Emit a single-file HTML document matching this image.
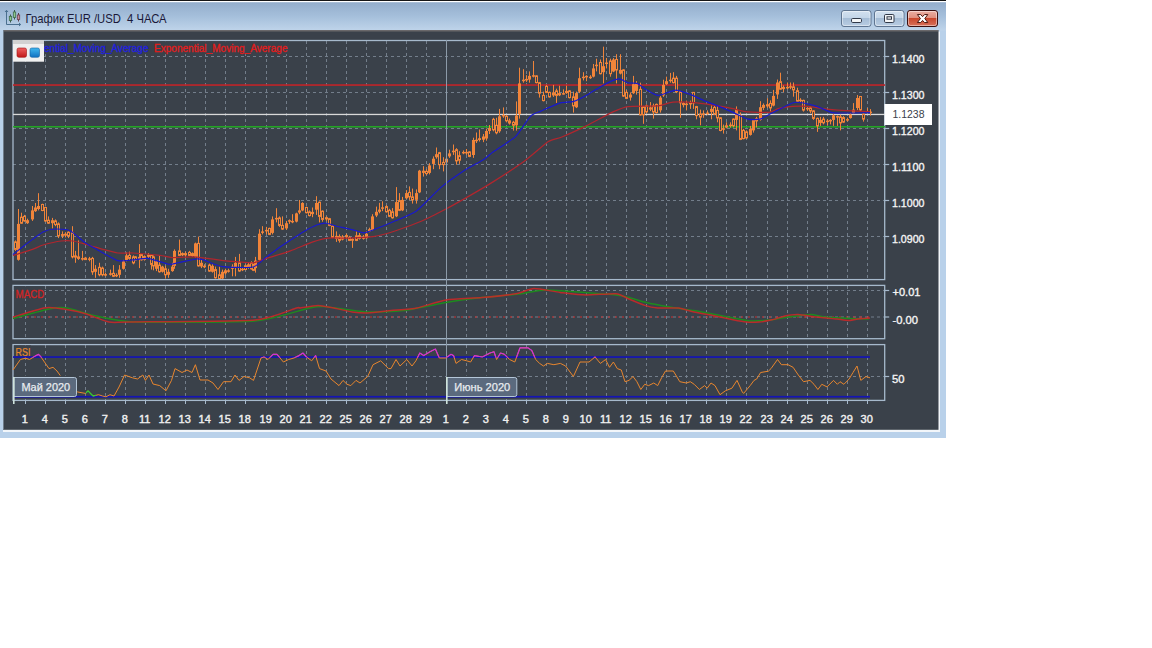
<!DOCTYPE html><html><head><meta charset="utf-8"><style>html,body{margin:0;padding:0;background:#fff;width:1152px;height:648px;overflow:hidden}svg{display:block}</style></head><body><svg width="1152" height="648" viewBox="0 0 1152 648"><rect x="0" y="0" width="1152" height="648" fill="#ffffff"/><defs><linearGradient id="tb" x1="0" y1="0" x2="0" y2="1"><stop offset="0" stop-color="#93adcb"/><stop offset="0.5" stop-color="#a5bfdb"/><stop offset="1" stop-color="#bfd4ea"/></linearGradient><linearGradient id="bmin" x1="0" y1="0" x2="0" y2="1"><stop offset="0" stop-color="#d3e1ef"/><stop offset="0.45" stop-color="#c4d6e9"/><stop offset="0.5" stop-color="#a6bdd6"/><stop offset="1" stop-color="#b9cde3"/></linearGradient><linearGradient id="bcls" x1="0" y1="0" x2="0" y2="1"><stop offset="0" stop-color="#eab1a5"/><stop offset="0.45" stop-color="#e0907f"/><stop offset="0.5" stop-color="#c9482d"/><stop offset="1" stop-color="#d9735c"/></linearGradient><linearGradient id="lr" x1="0" y1="0" x2="0" y2="1"><stop offset="0" stop-color="#f06060"/><stop offset="1" stop-color="#c01818"/></linearGradient><linearGradient id="lb" x1="0" y1="0" x2="0" y2="1"><stop offset="0" stop-color="#40b8f0"/><stop offset="1" stop-color="#1070c0"/></linearGradient><clipPath id="cpMain"><rect x="13" y="40" width="872" height="239"/></clipPath><clipPath id="cpMag"><rect x="13" y="340" width="860" height="17.6"/></clipPath><clipPath id="cpGrn"><rect x="86" y="389" width="10" height="12"/></clipPath></defs><rect x="0" y="0" width="946" height="438" fill="#b9d1ea"/><rect x="0" y="2" width="946" height="28.5" fill="url(#tb)"/><rect x="0" y="0" width="946" height="1" fill="#151515"/><rect x="0" y="1" width="946" height="1.2" fill="#ffffff"/><rect x="3" y="31.5" width="937" height="400.5" fill="#f2f6fa"/><rect x="3" y="30" width="935.5" height="399.8" fill="#3a414a"/><rect x="3" y="30.4" width="935.5" height="0.9" fill="#8a8480"/><rect x="3" y="30" width="1" height="399.8" fill="#6f7c8a"/><g fill="none" stroke="#4a6f8f" stroke-width="1"><path d="M6.5,10.5 V24.5 H20.5"/><path d="M5,12 L6.5,10.3 L8,12"/><path d="M19,23 L20.7,24.5 L19,26"/></g><g stroke-width="1"><path d="M10.5,14.5 V22.5" stroke="#3d5a4a"/><rect x="9.3" y="16.3" width="2.4" height="4.2" fill="#8fc78f" stroke="#3d6a4a" stroke-width="0.8"/><path d="M14.5,10 V19.5" stroke="#3d5a4a"/><rect x="13.3" y="12" width="2.4" height="5.5" fill="#8fc78f" stroke="#3d6a4a" stroke-width="0.8"/><path d="M18.5,13 V21.5" stroke="#5a3d4a"/><rect x="17.3" y="15" width="2.4" height="4.5" fill="#c78f9f" stroke="#6a3d4a" stroke-width="0.8"/></g><text x="25.5" y="22.8" font-family="Liberation Sans, sans-serif" font-size="12.2" fill="#1a1838" textLength="141" lengthAdjust="spacingAndGlyphs">График EUR /USD&#160; 4 ЧАСА</text><rect x="841.5" y="10.5" width="29.5" height="16" rx="2.5" fill="url(#bmin)" stroke="#5f7591" stroke-width="1"/><rect x="842.5" y="11.5" width="27.5" height="14" rx="2" fill="none" stroke="#ffffff" stroke-opacity="0.45" stroke-width="1"/><rect x="874.5" y="10.5" width="29.5" height="16" rx="2.5" fill="url(#bmin)" stroke="#5f7591" stroke-width="1"/><rect x="875.5" y="11.5" width="27.5" height="14" rx="2" fill="none" stroke="#ffffff" stroke-opacity="0.45" stroke-width="1"/><rect x="907.5" y="10.5" width="30.0" height="16" rx="2.5" fill="url(#bcls)" stroke="#3a1010" stroke-width="1"/><rect x="908.5" y="11.5" width="28.0" height="14" rx="2" fill="none" stroke="#ffffff" stroke-opacity="0.45" stroke-width="1"/><rect x="851.5" y="18.5" width="10" height="4" rx="1.2" fill="#f4f6f8" stroke="#303848" stroke-width="1"/><rect x="884.5" y="14.5" width="9.5" height="8" rx="1.2" fill="#f4f6f8" stroke="#303848" stroke-width="1"/><rect x="887" y="16.8" width="4.5" height="2.4" fill="none" stroke="#303848" stroke-width="1"/><polygon points="917.40,14.55 920.70,14.55 922.60,16.65 924.50,14.55 927.80,14.55 924.80,18.55 927.80,22.55 924.50,22.55 922.60,20.45 920.70,22.55 917.40,22.55 920.40,18.55" fill="#ffffff" stroke="#4a1810" stroke-width="1" stroke-linejoin="round"/><line x1="25.5" y1="41" x2="25.5" y2="279" stroke="#737e8b" stroke-width="1" stroke-dasharray="3,3"/><line x1="45.5" y1="41" x2="45.5" y2="279" stroke="#737e8b" stroke-width="1" stroke-dasharray="3,3"/><line x1="65.5" y1="41" x2="65.5" y2="279" stroke="#737e8b" stroke-width="1" stroke-dasharray="3,3"/><line x1="85.5" y1="41" x2="85.5" y2="279" stroke="#737e8b" stroke-width="1" stroke-dasharray="3,3"/><line x1="105.5" y1="41" x2="105.5" y2="279" stroke="#737e8b" stroke-width="1" stroke-dasharray="3,3"/><line x1="125.5" y1="41" x2="125.5" y2="279" stroke="#737e8b" stroke-width="1" stroke-dasharray="3,3"/><line x1="145.5" y1="41" x2="145.5" y2="279" stroke="#737e8b" stroke-width="1" stroke-dasharray="3,3"/><line x1="165.5" y1="41" x2="165.5" y2="279" stroke="#737e8b" stroke-width="1" stroke-dasharray="3,3"/><line x1="185.5" y1="41" x2="185.5" y2="279" stroke="#737e8b" stroke-width="1" stroke-dasharray="3,3"/><line x1="205.5" y1="41" x2="205.5" y2="279" stroke="#737e8b" stroke-width="1" stroke-dasharray="3,3"/><line x1="225.5" y1="41" x2="225.5" y2="279" stroke="#737e8b" stroke-width="1" stroke-dasharray="3,3"/><line x1="245.5" y1="41" x2="245.5" y2="279" stroke="#737e8b" stroke-width="1" stroke-dasharray="3,3"/><line x1="266.5" y1="41" x2="266.5" y2="279" stroke="#737e8b" stroke-width="1" stroke-dasharray="3,3"/><line x1="286.5" y1="41" x2="286.5" y2="279" stroke="#737e8b" stroke-width="1" stroke-dasharray="3,3"/><line x1="306.5" y1="41" x2="306.5" y2="279" stroke="#737e8b" stroke-width="1" stroke-dasharray="3,3"/><line x1="326.5" y1="41" x2="326.5" y2="279" stroke="#737e8b" stroke-width="1" stroke-dasharray="3,3"/><line x1="346.5" y1="41" x2="346.5" y2="279" stroke="#737e8b" stroke-width="1" stroke-dasharray="3,3"/><line x1="366.5" y1="41" x2="366.5" y2="279" stroke="#737e8b" stroke-width="1" stroke-dasharray="3,3"/><line x1="386.5" y1="41" x2="386.5" y2="279" stroke="#737e8b" stroke-width="1" stroke-dasharray="3,3"/><line x1="406.5" y1="41" x2="406.5" y2="279" stroke="#737e8b" stroke-width="1" stroke-dasharray="3,3"/><line x1="426.5" y1="41" x2="426.5" y2="279" stroke="#737e8b" stroke-width="1" stroke-dasharray="3,3"/><line x1="446.5" y1="41" x2="446.5" y2="279" stroke="#737e8b" stroke-width="1" stroke-dasharray="3,3"/><line x1="466.5" y1="41" x2="466.5" y2="279" stroke="#737e8b" stroke-width="1" stroke-dasharray="3,3"/><line x1="486.5" y1="41" x2="486.5" y2="279" stroke="#737e8b" stroke-width="1" stroke-dasharray="3,3"/><line x1="506.5" y1="41" x2="506.5" y2="279" stroke="#737e8b" stroke-width="1" stroke-dasharray="3,3"/><line x1="526.5" y1="41" x2="526.5" y2="279" stroke="#737e8b" stroke-width="1" stroke-dasharray="3,3"/><line x1="546.5" y1="41" x2="546.5" y2="279" stroke="#737e8b" stroke-width="1" stroke-dasharray="3,3"/><line x1="566.5" y1="41" x2="566.5" y2="279" stroke="#737e8b" stroke-width="1" stroke-dasharray="3,3"/><line x1="586.5" y1="41" x2="586.5" y2="279" stroke="#737e8b" stroke-width="1" stroke-dasharray="3,3"/><line x1="606.5" y1="41" x2="606.5" y2="279" stroke="#737e8b" stroke-width="1" stroke-dasharray="3,3"/><line x1="626.5" y1="41" x2="626.5" y2="279" stroke="#737e8b" stroke-width="1" stroke-dasharray="3,3"/><line x1="646.5" y1="41" x2="646.5" y2="279" stroke="#737e8b" stroke-width="1" stroke-dasharray="3,3"/><line x1="666.5" y1="41" x2="666.5" y2="279" stroke="#737e8b" stroke-width="1" stroke-dasharray="3,3"/><line x1="686.5" y1="41" x2="686.5" y2="279" stroke="#737e8b" stroke-width="1" stroke-dasharray="3,3"/><line x1="706.5" y1="41" x2="706.5" y2="279" stroke="#737e8b" stroke-width="1" stroke-dasharray="3,3"/><line x1="726.5" y1="41" x2="726.5" y2="279" stroke="#737e8b" stroke-width="1" stroke-dasharray="3,3"/><line x1="746.5" y1="41" x2="746.5" y2="279" stroke="#737e8b" stroke-width="1" stroke-dasharray="3,3"/><line x1="767.5" y1="41" x2="767.5" y2="279" stroke="#737e8b" stroke-width="1" stroke-dasharray="3,3"/><line x1="787.5" y1="41" x2="787.5" y2="279" stroke="#737e8b" stroke-width="1" stroke-dasharray="3,3"/><line x1="807.5" y1="41" x2="807.5" y2="279" stroke="#737e8b" stroke-width="1" stroke-dasharray="3,3"/><line x1="827.5" y1="41" x2="827.5" y2="279" stroke="#737e8b" stroke-width="1" stroke-dasharray="3,3"/><line x1="847.5" y1="41" x2="847.5" y2="279" stroke="#737e8b" stroke-width="1" stroke-dasharray="3,3"/><line x1="867.5" y1="41" x2="867.5" y2="279" stroke="#737e8b" stroke-width="1" stroke-dasharray="3,3"/><line x1="25.5" y1="286" x2="25.5" y2="338" stroke="#737e8b" stroke-width="1" stroke-dasharray="3,3"/><line x1="45.5" y1="286" x2="45.5" y2="338" stroke="#737e8b" stroke-width="1" stroke-dasharray="3,3"/><line x1="65.5" y1="286" x2="65.5" y2="338" stroke="#737e8b" stroke-width="1" stroke-dasharray="3,3"/><line x1="85.5" y1="286" x2="85.5" y2="338" stroke="#737e8b" stroke-width="1" stroke-dasharray="3,3"/><line x1="105.5" y1="286" x2="105.5" y2="338" stroke="#737e8b" stroke-width="1" stroke-dasharray="3,3"/><line x1="125.5" y1="286" x2="125.5" y2="338" stroke="#737e8b" stroke-width="1" stroke-dasharray="3,3"/><line x1="145.5" y1="286" x2="145.5" y2="338" stroke="#737e8b" stroke-width="1" stroke-dasharray="3,3"/><line x1="165.5" y1="286" x2="165.5" y2="338" stroke="#737e8b" stroke-width="1" stroke-dasharray="3,3"/><line x1="185.5" y1="286" x2="185.5" y2="338" stroke="#737e8b" stroke-width="1" stroke-dasharray="3,3"/><line x1="205.5" y1="286" x2="205.5" y2="338" stroke="#737e8b" stroke-width="1" stroke-dasharray="3,3"/><line x1="225.5" y1="286" x2="225.5" y2="338" stroke="#737e8b" stroke-width="1" stroke-dasharray="3,3"/><line x1="245.5" y1="286" x2="245.5" y2="338" stroke="#737e8b" stroke-width="1" stroke-dasharray="3,3"/><line x1="266.5" y1="286" x2="266.5" y2="338" stroke="#737e8b" stroke-width="1" stroke-dasharray="3,3"/><line x1="286.5" y1="286" x2="286.5" y2="338" stroke="#737e8b" stroke-width="1" stroke-dasharray="3,3"/><line x1="306.5" y1="286" x2="306.5" y2="338" stroke="#737e8b" stroke-width="1" stroke-dasharray="3,3"/><line x1="326.5" y1="286" x2="326.5" y2="338" stroke="#737e8b" stroke-width="1" stroke-dasharray="3,3"/><line x1="346.5" y1="286" x2="346.5" y2="338" stroke="#737e8b" stroke-width="1" stroke-dasharray="3,3"/><line x1="366.5" y1="286" x2="366.5" y2="338" stroke="#737e8b" stroke-width="1" stroke-dasharray="3,3"/><line x1="386.5" y1="286" x2="386.5" y2="338" stroke="#737e8b" stroke-width="1" stroke-dasharray="3,3"/><line x1="406.5" y1="286" x2="406.5" y2="338" stroke="#737e8b" stroke-width="1" stroke-dasharray="3,3"/><line x1="426.5" y1="286" x2="426.5" y2="338" stroke="#737e8b" stroke-width="1" stroke-dasharray="3,3"/><line x1="446.5" y1="286" x2="446.5" y2="338" stroke="#737e8b" stroke-width="1" stroke-dasharray="3,3"/><line x1="466.5" y1="286" x2="466.5" y2="338" stroke="#737e8b" stroke-width="1" stroke-dasharray="3,3"/><line x1="486.5" y1="286" x2="486.5" y2="338" stroke="#737e8b" stroke-width="1" stroke-dasharray="3,3"/><line x1="506.5" y1="286" x2="506.5" y2="338" stroke="#737e8b" stroke-width="1" stroke-dasharray="3,3"/><line x1="526.5" y1="286" x2="526.5" y2="338" stroke="#737e8b" stroke-width="1" stroke-dasharray="3,3"/><line x1="546.5" y1="286" x2="546.5" y2="338" stroke="#737e8b" stroke-width="1" stroke-dasharray="3,3"/><line x1="566.5" y1="286" x2="566.5" y2="338" stroke="#737e8b" stroke-width="1" stroke-dasharray="3,3"/><line x1="586.5" y1="286" x2="586.5" y2="338" stroke="#737e8b" stroke-width="1" stroke-dasharray="3,3"/><line x1="606.5" y1="286" x2="606.5" y2="338" stroke="#737e8b" stroke-width="1" stroke-dasharray="3,3"/><line x1="626.5" y1="286" x2="626.5" y2="338" stroke="#737e8b" stroke-width="1" stroke-dasharray="3,3"/><line x1="646.5" y1="286" x2="646.5" y2="338" stroke="#737e8b" stroke-width="1" stroke-dasharray="3,3"/><line x1="666.5" y1="286" x2="666.5" y2="338" stroke="#737e8b" stroke-width="1" stroke-dasharray="3,3"/><line x1="686.5" y1="286" x2="686.5" y2="338" stroke="#737e8b" stroke-width="1" stroke-dasharray="3,3"/><line x1="706.5" y1="286" x2="706.5" y2="338" stroke="#737e8b" stroke-width="1" stroke-dasharray="3,3"/><line x1="726.5" y1="286" x2="726.5" y2="338" stroke="#737e8b" stroke-width="1" stroke-dasharray="3,3"/><line x1="746.5" y1="286" x2="746.5" y2="338" stroke="#737e8b" stroke-width="1" stroke-dasharray="3,3"/><line x1="767.5" y1="286" x2="767.5" y2="338" stroke="#737e8b" stroke-width="1" stroke-dasharray="3,3"/><line x1="787.5" y1="286" x2="787.5" y2="338" stroke="#737e8b" stroke-width="1" stroke-dasharray="3,3"/><line x1="807.5" y1="286" x2="807.5" y2="338" stroke="#737e8b" stroke-width="1" stroke-dasharray="3,3"/><line x1="827.5" y1="286" x2="827.5" y2="338" stroke="#737e8b" stroke-width="1" stroke-dasharray="3,3"/><line x1="847.5" y1="286" x2="847.5" y2="338" stroke="#737e8b" stroke-width="1" stroke-dasharray="3,3"/><line x1="867.5" y1="286" x2="867.5" y2="338" stroke="#737e8b" stroke-width="1" stroke-dasharray="3,3"/><line x1="25.5" y1="345" x2="25.5" y2="400" stroke="#737e8b" stroke-width="1" stroke-dasharray="3,3"/><line x1="45.5" y1="345" x2="45.5" y2="400" stroke="#737e8b" stroke-width="1" stroke-dasharray="3,3"/><line x1="65.5" y1="345" x2="65.5" y2="400" stroke="#737e8b" stroke-width="1" stroke-dasharray="3,3"/><line x1="85.5" y1="345" x2="85.5" y2="400" stroke="#737e8b" stroke-width="1" stroke-dasharray="3,3"/><line x1="105.5" y1="345" x2="105.5" y2="400" stroke="#737e8b" stroke-width="1" stroke-dasharray="3,3"/><line x1="125.5" y1="345" x2="125.5" y2="400" stroke="#737e8b" stroke-width="1" stroke-dasharray="3,3"/><line x1="145.5" y1="345" x2="145.5" y2="400" stroke="#737e8b" stroke-width="1" stroke-dasharray="3,3"/><line x1="165.5" y1="345" x2="165.5" y2="400" stroke="#737e8b" stroke-width="1" stroke-dasharray="3,3"/><line x1="185.5" y1="345" x2="185.5" y2="400" stroke="#737e8b" stroke-width="1" stroke-dasharray="3,3"/><line x1="205.5" y1="345" x2="205.5" y2="400" stroke="#737e8b" stroke-width="1" stroke-dasharray="3,3"/><line x1="225.5" y1="345" x2="225.5" y2="400" stroke="#737e8b" stroke-width="1" stroke-dasharray="3,3"/><line x1="245.5" y1="345" x2="245.5" y2="400" stroke="#737e8b" stroke-width="1" stroke-dasharray="3,3"/><line x1="266.5" y1="345" x2="266.5" y2="400" stroke="#737e8b" stroke-width="1" stroke-dasharray="3,3"/><line x1="286.5" y1="345" x2="286.5" y2="400" stroke="#737e8b" stroke-width="1" stroke-dasharray="3,3"/><line x1="306.5" y1="345" x2="306.5" y2="400" stroke="#737e8b" stroke-width="1" stroke-dasharray="3,3"/><line x1="326.5" y1="345" x2="326.5" y2="400" stroke="#737e8b" stroke-width="1" stroke-dasharray="3,3"/><line x1="346.5" y1="345" x2="346.5" y2="400" stroke="#737e8b" stroke-width="1" stroke-dasharray="3,3"/><line x1="366.5" y1="345" x2="366.5" y2="400" stroke="#737e8b" stroke-width="1" stroke-dasharray="3,3"/><line x1="386.5" y1="345" x2="386.5" y2="400" stroke="#737e8b" stroke-width="1" stroke-dasharray="3,3"/><line x1="406.5" y1="345" x2="406.5" y2="400" stroke="#737e8b" stroke-width="1" stroke-dasharray="3,3"/><line x1="426.5" y1="345" x2="426.5" y2="400" stroke="#737e8b" stroke-width="1" stroke-dasharray="3,3"/><line x1="446.5" y1="345" x2="446.5" y2="400" stroke="#737e8b" stroke-width="1" stroke-dasharray="3,3"/><line x1="466.5" y1="345" x2="466.5" y2="400" stroke="#737e8b" stroke-width="1" stroke-dasharray="3,3"/><line x1="486.5" y1="345" x2="486.5" y2="400" stroke="#737e8b" stroke-width="1" stroke-dasharray="3,3"/><line x1="506.5" y1="345" x2="506.5" y2="400" stroke="#737e8b" stroke-width="1" stroke-dasharray="3,3"/><line x1="526.5" y1="345" x2="526.5" y2="400" stroke="#737e8b" stroke-width="1" stroke-dasharray="3,3"/><line x1="546.5" y1="345" x2="546.5" y2="400" stroke="#737e8b" stroke-width="1" stroke-dasharray="3,3"/><line x1="566.5" y1="345" x2="566.5" y2="400" stroke="#737e8b" stroke-width="1" stroke-dasharray="3,3"/><line x1="586.5" y1="345" x2="586.5" y2="400" stroke="#737e8b" stroke-width="1" stroke-dasharray="3,3"/><line x1="606.5" y1="345" x2="606.5" y2="400" stroke="#737e8b" stroke-width="1" stroke-dasharray="3,3"/><line x1="626.5" y1="345" x2="626.5" y2="400" stroke="#737e8b" stroke-width="1" stroke-dasharray="3,3"/><line x1="646.5" y1="345" x2="646.5" y2="400" stroke="#737e8b" stroke-width="1" stroke-dasharray="3,3"/><line x1="666.5" y1="345" x2="666.5" y2="400" stroke="#737e8b" stroke-width="1" stroke-dasharray="3,3"/><line x1="686.5" y1="345" x2="686.5" y2="400" stroke="#737e8b" stroke-width="1" stroke-dasharray="3,3"/><line x1="706.5" y1="345" x2="706.5" y2="400" stroke="#737e8b" stroke-width="1" stroke-dasharray="3,3"/><line x1="726.5" y1="345" x2="726.5" y2="400" stroke="#737e8b" stroke-width="1" stroke-dasharray="3,3"/><line x1="746.5" y1="345" x2="746.5" y2="400" stroke="#737e8b" stroke-width="1" stroke-dasharray="3,3"/><line x1="767.5" y1="345" x2="767.5" y2="400" stroke="#737e8b" stroke-width="1" stroke-dasharray="3,3"/><line x1="787.5" y1="345" x2="787.5" y2="400" stroke="#737e8b" stroke-width="1" stroke-dasharray="3,3"/><line x1="807.5" y1="345" x2="807.5" y2="400" stroke="#737e8b" stroke-width="1" stroke-dasharray="3,3"/><line x1="827.5" y1="345" x2="827.5" y2="400" stroke="#737e8b" stroke-width="1" stroke-dasharray="3,3"/><line x1="847.5" y1="345" x2="847.5" y2="400" stroke="#737e8b" stroke-width="1" stroke-dasharray="3,3"/><line x1="867.5" y1="345" x2="867.5" y2="400" stroke="#737e8b" stroke-width="1" stroke-dasharray="3,3"/><line x1="13" y1="56.5" x2="884.7" y2="56.5" stroke="#737e8b" stroke-width="1" stroke-dasharray="3,3"/><line x1="13" y1="92.5" x2="884.7" y2="92.5" stroke="#737e8b" stroke-width="1" stroke-dasharray="3,3"/><line x1="13" y1="128.5" x2="884.7" y2="128.5" stroke="#737e8b" stroke-width="1" stroke-dasharray="3,3"/><line x1="13" y1="164.5" x2="884.7" y2="164.5" stroke="#737e8b" stroke-width="1" stroke-dasharray="3,3"/><line x1="13" y1="200.5" x2="884.7" y2="200.5" stroke="#737e8b" stroke-width="1" stroke-dasharray="3,3"/><line x1="13" y1="236.5" x2="884.7" y2="236.5" stroke="#737e8b" stroke-width="1" stroke-dasharray="3,3"/><line x1="13" y1="290.5" x2="884.7" y2="290.5" stroke="#737e8b" stroke-width="1" stroke-dasharray="3,3"/><line x1="13" y1="317.0" x2="884.7" y2="317.0" stroke="#737e8b" stroke-width="1" stroke-dasharray="3,3"/><line x1="13" y1="376.5" x2="884.7" y2="376.5" stroke="#737e8b" stroke-width="1" stroke-dasharray="3,3"/><rect x="13" y="40.5" width="871.7" height="239.10000000000002" fill="none" stroke="#a6b9cc" stroke-width="1.3"/><rect x="13" y="285.4" width="871.7" height="53.30000000000001" fill="none" stroke="#a6b9cc" stroke-width="1.3"/><rect x="13" y="344.6" width="871.7" height="55.799999999999955" fill="none" stroke="#a6b9cc" stroke-width="1.3"/><line x1="884.7" y1="56.5" x2="889.2" y2="56.5" stroke="#a6b9cc" stroke-width="1.2"/><line x1="884.7" y1="92.5" x2="889.2" y2="92.5" stroke="#a6b9cc" stroke-width="1.2"/><line x1="884.7" y1="128.5" x2="889.2" y2="128.5" stroke="#a6b9cc" stroke-width="1.2"/><line x1="884.7" y1="164.5" x2="889.2" y2="164.5" stroke="#a6b9cc" stroke-width="1.2"/><line x1="884.7" y1="200.5" x2="889.2" y2="200.5" stroke="#a6b9cc" stroke-width="1.2"/><line x1="884.7" y1="236.5" x2="889.2" y2="236.5" stroke="#a6b9cc" stroke-width="1.2"/><line x1="884.7" y1="290.5" x2="889.2" y2="290.5" stroke="#a6b9cc" stroke-width="1.2"/><line x1="884.7" y1="317.0" x2="889.2" y2="317.0" stroke="#a6b9cc" stroke-width="1.2"/><line x1="884.7" y1="376.5" x2="889.2" y2="376.5" stroke="#a6b9cc" stroke-width="1.2"/><line x1="25.5" y1="400" x2="25.5" y2="404" stroke="#a6b9cc" stroke-width="1"/><line x1="45.5" y1="400" x2="45.5" y2="404" stroke="#a6b9cc" stroke-width="1"/><line x1="65.5" y1="400" x2="65.5" y2="404" stroke="#a6b9cc" stroke-width="1"/><line x1="85.5" y1="400" x2="85.5" y2="404" stroke="#a6b9cc" stroke-width="1"/><line x1="105.5" y1="400" x2="105.5" y2="404" stroke="#a6b9cc" stroke-width="1"/><line x1="125.5" y1="400" x2="125.5" y2="404" stroke="#a6b9cc" stroke-width="1"/><line x1="145.5" y1="400" x2="145.5" y2="404" stroke="#a6b9cc" stroke-width="1"/><line x1="165.5" y1="400" x2="165.5" y2="404" stroke="#a6b9cc" stroke-width="1"/><line x1="185.5" y1="400" x2="185.5" y2="404" stroke="#a6b9cc" stroke-width="1"/><line x1="205.5" y1="400" x2="205.5" y2="404" stroke="#a6b9cc" stroke-width="1"/><line x1="225.5" y1="400" x2="225.5" y2="404" stroke="#a6b9cc" stroke-width="1"/><line x1="245.5" y1="400" x2="245.5" y2="404" stroke="#a6b9cc" stroke-width="1"/><line x1="266.5" y1="400" x2="266.5" y2="404" stroke="#a6b9cc" stroke-width="1"/><line x1="286.5" y1="400" x2="286.5" y2="404" stroke="#a6b9cc" stroke-width="1"/><line x1="306.5" y1="400" x2="306.5" y2="404" stroke="#a6b9cc" stroke-width="1"/><line x1="326.5" y1="400" x2="326.5" y2="404" stroke="#a6b9cc" stroke-width="1"/><line x1="346.5" y1="400" x2="346.5" y2="404" stroke="#a6b9cc" stroke-width="1"/><line x1="366.5" y1="400" x2="366.5" y2="404" stroke="#a6b9cc" stroke-width="1"/><line x1="386.5" y1="400" x2="386.5" y2="404" stroke="#a6b9cc" stroke-width="1"/><line x1="406.5" y1="400" x2="406.5" y2="404" stroke="#a6b9cc" stroke-width="1"/><line x1="426.5" y1="400" x2="426.5" y2="404" stroke="#a6b9cc" stroke-width="1"/><line x1="446.5" y1="400" x2="446.5" y2="404" stroke="#a6b9cc" stroke-width="1"/><line x1="466.5" y1="400" x2="466.5" y2="404" stroke="#a6b9cc" stroke-width="1"/><line x1="486.5" y1="400" x2="486.5" y2="404" stroke="#a6b9cc" stroke-width="1"/><line x1="506.5" y1="400" x2="506.5" y2="404" stroke="#a6b9cc" stroke-width="1"/><line x1="526.5" y1="400" x2="526.5" y2="404" stroke="#a6b9cc" stroke-width="1"/><line x1="546.5" y1="400" x2="546.5" y2="404" stroke="#a6b9cc" stroke-width="1"/><line x1="566.5" y1="400" x2="566.5" y2="404" stroke="#a6b9cc" stroke-width="1"/><line x1="586.5" y1="400" x2="586.5" y2="404" stroke="#a6b9cc" stroke-width="1"/><line x1="606.5" y1="400" x2="606.5" y2="404" stroke="#a6b9cc" stroke-width="1"/><line x1="626.5" y1="400" x2="626.5" y2="404" stroke="#a6b9cc" stroke-width="1"/><line x1="646.5" y1="400" x2="646.5" y2="404" stroke="#a6b9cc" stroke-width="1"/><line x1="666.5" y1="400" x2="666.5" y2="404" stroke="#a6b9cc" stroke-width="1"/><line x1="686.5" y1="400" x2="686.5" y2="404" stroke="#a6b9cc" stroke-width="1"/><line x1="706.5" y1="400" x2="706.5" y2="404" stroke="#a6b9cc" stroke-width="1"/><line x1="726.5" y1="400" x2="726.5" y2="404" stroke="#a6b9cc" stroke-width="1"/><line x1="746.5" y1="400" x2="746.5" y2="404" stroke="#a6b9cc" stroke-width="1"/><line x1="767.5" y1="400" x2="767.5" y2="404" stroke="#a6b9cc" stroke-width="1"/><line x1="787.5" y1="400" x2="787.5" y2="404" stroke="#a6b9cc" stroke-width="1"/><line x1="807.5" y1="400" x2="807.5" y2="404" stroke="#a6b9cc" stroke-width="1"/><line x1="827.5" y1="400" x2="827.5" y2="404" stroke="#a6b9cc" stroke-width="1"/><line x1="847.5" y1="400" x2="847.5" y2="404" stroke="#a6b9cc" stroke-width="1"/><line x1="867.5" y1="400" x2="867.5" y2="404" stroke="#a6b9cc" stroke-width="1"/><rect x="13" y="84.2" width="872" height="1.7" fill="#b8262b"/><rect x="13" y="113.8" width="872" height="1.3" fill="#d8d8d8"/><rect x="13" y="126.1" width="872" height="1.4" fill="#22b022"/><g clip-path="url(#cpMain)"><line x1="15.5" y1="240.4" x2="15.5" y2="250.9" stroke="#f0843a" stroke-width="1"/><rect x="14.5" y="241.9" width="2" height="7.5" fill="#3a414a" stroke="#f0843a" stroke-width="1"/><line x1="18.5" y1="209.0" x2="18.5" y2="260.6" stroke="#f0843a" stroke-width="1"/><rect x="17.0" y="223.9" width="3" height="35.9" fill="#f0843a"/><line x1="21.5" y1="212.7" x2="21.5" y2="223.9" stroke="#f0843a" stroke-width="1"/><rect x="20.5" y="217.2" width="2" height="6.0" fill="#3a414a" stroke="#f0843a" stroke-width="1"/><line x1="24.5" y1="214.9" x2="24.5" y2="221.7" stroke="#f0843a" stroke-width="1"/><rect x="23.5" y="216.4" width="2" height="4.5" fill="#3a414a" stroke="#f0843a" stroke-width="1"/><line x1="27.5" y1="218.7" x2="27.5" y2="223.9" stroke="#f0843a" stroke-width="1"/><rect x="26.0" y="220.2" width="3" height="3.0" fill="#f0843a"/><line x1="32.5" y1="206.0" x2="32.5" y2="220.9" stroke="#f0843a" stroke-width="1"/><rect x="31.0" y="210.4" width="3" height="9.0" fill="#f0843a"/><line x1="35.5" y1="203.0" x2="35.5" y2="211.9" stroke="#f0843a" stroke-width="1"/><rect x="34.0" y="207.5" width="3" height="3.7" fill="#f0843a"/><line x1="38.5" y1="193.2" x2="38.5" y2="210.4" stroke="#f0843a" stroke-width="1"/><rect x="37.0" y="206.0" width="3" height="3.0" fill="#f0843a"/><line x1="42.5" y1="203.7" x2="42.5" y2="211.2" stroke="#f0843a" stroke-width="1"/><rect x="41.5" y="204.5" width="2" height="6.0" fill="#3a414a" stroke="#f0843a" stroke-width="1"/><line x1="45.5" y1="206.7" x2="45.5" y2="221.7" stroke="#f0843a" stroke-width="1"/><rect x="44.5" y="207.5" width="2" height="13.5" fill="#3a414a" stroke="#f0843a" stroke-width="1"/><line x1="48.5" y1="216.4" x2="48.5" y2="223.9" stroke="#f0843a" stroke-width="1"/><rect x="47.5" y="220.2" width="2" height="3.0" fill="#3a414a" stroke="#f0843a" stroke-width="1"/><line x1="52.5" y1="217.9" x2="52.5" y2="228.4" stroke="#f0843a" stroke-width="1"/><rect x="51.0" y="220.2" width="3" height="3.0" fill="#f0843a"/><line x1="55.5" y1="219.4" x2="55.5" y2="226.2" stroke="#f0843a" stroke-width="1"/><rect x="54.5" y="220.9" width="2" height="3.7" fill="#3a414a" stroke="#f0843a" stroke-width="1"/><line x1="58.5" y1="222.4" x2="58.5" y2="238.1" stroke="#f0843a" stroke-width="1"/><rect x="57.5" y="223.9" width="2" height="12.0" fill="#3a414a" stroke="#f0843a" stroke-width="1"/><line x1="62.5" y1="231.4" x2="62.5" y2="238.1" stroke="#f0843a" stroke-width="1"/><rect x="61.0" y="234.1" width="3" height="1.8" fill="#f0843a"/><line x1="65.5" y1="232.2" x2="65.5" y2="237.4" stroke="#f0843a" stroke-width="1"/><rect x="64.0" y="233.7" width="3" height="1.9" fill="#f0843a"/><line x1="68.5" y1="231.4" x2="68.5" y2="238.1" stroke="#f0843a" stroke-width="1"/><rect x="67.5" y="232.2" width="2" height="3.7" fill="#3a414a" stroke="#f0843a" stroke-width="1"/><line x1="72.5" y1="226.2" x2="72.5" y2="258.4" stroke="#f0843a" stroke-width="1"/><rect x="71.5" y="232.9" width="2" height="24.0" fill="#3a414a" stroke="#f0843a" stroke-width="1"/><line x1="75.5" y1="250.9" x2="75.5" y2="262.8" stroke="#f0843a" stroke-width="1"/><rect x="74.0" y="255.4" width="3" height="2.2" fill="#f0843a"/><line x1="78.5" y1="240.4" x2="78.5" y2="259.9" stroke="#f0843a" stroke-width="1"/><rect x="77.5" y="256.9" width="2" height="1.5" fill="#3a414a" stroke="#f0843a" stroke-width="1"/><line x1="82.5" y1="250.9" x2="82.5" y2="260.6" stroke="#f0843a" stroke-width="1"/><rect x="81.0" y="258.1" width="3" height="1.5" fill="#f0843a"/><line x1="85.5" y1="256.9" x2="85.5" y2="259.9" stroke="#f0843a" stroke-width="1"/><rect x="84.5" y="258.1" width="2" height="1.5" fill="#3a414a" stroke="#f0843a" stroke-width="1"/><line x1="89.5" y1="256.9" x2="89.5" y2="261.3" stroke="#f0843a" stroke-width="1"/><rect x="88.0" y="258.4" width="3" height="1.5" fill="#f0843a"/><line x1="92.5" y1="256.9" x2="92.5" y2="274.8" stroke="#f0843a" stroke-width="1"/><rect x="91.5" y="258.4" width="2" height="13.5" fill="#3a414a" stroke="#f0843a" stroke-width="1"/><line x1="95.5" y1="265.1" x2="95.5" y2="277.8" stroke="#f0843a" stroke-width="1"/><rect x="94.0" y="268.8" width="3" height="3.0" fill="#f0843a"/><line x1="99.5" y1="262.8" x2="99.5" y2="276.3" stroke="#f0843a" stroke-width="1"/><rect x="98.5" y="267.3" width="2" height="7.5" fill="#3a414a" stroke="#f0843a" stroke-width="1"/><line x1="102.5" y1="266.6" x2="102.5" y2="276.3" stroke="#f0843a" stroke-width="1"/><rect x="101.5" y="268.1" width="2" height="6.7" fill="#3a414a" stroke="#f0843a" stroke-width="1"/><line x1="105.5" y1="272.6" x2="105.5" y2="276.3" stroke="#f0843a" stroke-width="1"/><rect x="104.0" y="274.1" width="3" height="1.5" fill="#f0843a"/><line x1="110.5" y1="269.6" x2="110.5" y2="275.6" stroke="#f0843a" stroke-width="1"/><rect x="109.0" y="273.3" width="3" height="1.5" fill="#f0843a"/><line x1="113.5" y1="265.1" x2="113.5" y2="277.1" stroke="#f0843a" stroke-width="1"/><rect x="112.5" y="273.3" width="2" height="3.0" fill="#3a414a" stroke="#f0843a" stroke-width="1"/><line x1="116.5" y1="273.3" x2="116.5" y2="277.1" stroke="#f0843a" stroke-width="1"/><rect x="115.0" y="274.8" width="3" height="1.5" fill="#f0843a"/><line x1="119.5" y1="265.1" x2="119.5" y2="277.8" stroke="#f0843a" stroke-width="1"/><rect x="118.0" y="269.6" width="3" height="5.2" fill="#f0843a"/><line x1="123.5" y1="259.9" x2="123.5" y2="269.6" stroke="#f0843a" stroke-width="1"/><rect x="122.0" y="261.3" width="3" height="7.5" fill="#f0843a"/><line x1="126.5" y1="252.4" x2="126.5" y2="261.3" stroke="#f0843a" stroke-width="1"/><rect x="125.0" y="255.4" width="3" height="4.5" fill="#f0843a"/><line x1="129.5" y1="251.6" x2="129.5" y2="259.9" stroke="#f0843a" stroke-width="1"/><rect x="128.5" y="255.4" width="2" height="3.0" fill="#3a414a" stroke="#f0843a" stroke-width="1"/><line x1="133.5" y1="255.4" x2="133.5" y2="264.3" stroke="#f0843a" stroke-width="1"/><rect x="132.5" y="256.9" width="2" height="6.0" fill="#3a414a" stroke="#f0843a" stroke-width="1"/><line x1="135.5" y1="256.1" x2="135.5" y2="260.6" stroke="#f0843a" stroke-width="1"/><rect x="134.5" y="256.9" width="2" height="3.0" fill="#3a414a" stroke="#f0843a" stroke-width="1"/><line x1="139.5" y1="244.1" x2="139.5" y2="268.1" stroke="#f0843a" stroke-width="1"/><rect x="138.0" y="256.9" width="3" height="2.2" fill="#f0843a"/><line x1="141.5" y1="253.9" x2="141.5" y2="260.6" stroke="#f0843a" stroke-width="1"/><rect x="140.5" y="254.6" width="2" height="5.2" fill="#3a414a" stroke="#f0843a" stroke-width="1"/><line x1="144.5" y1="255.4" x2="144.5" y2="260.6" stroke="#f0843a" stroke-width="1"/><rect x="143.0" y="256.1" width="3" height="3.7" fill="#f0843a"/><line x1="148.5" y1="253.1" x2="148.5" y2="258.4" stroke="#f0843a" stroke-width="1"/><rect x="147.0" y="254.6" width="3" height="2.2" fill="#f0843a"/><line x1="151.5" y1="254.6" x2="151.5" y2="269.6" stroke="#f0843a" stroke-width="1"/><rect x="150.5" y="255.4" width="2" height="9.0" fill="#3a414a" stroke="#f0843a" stroke-width="1"/><line x1="153.5" y1="255.4" x2="153.5" y2="270.3" stroke="#f0843a" stroke-width="1"/><rect x="152.5" y="256.9" width="2" height="9.0" fill="#3a414a" stroke="#f0843a" stroke-width="1"/><line x1="156.5" y1="259.9" x2="156.5" y2="271.1" stroke="#f0843a" stroke-width="1"/><rect x="155.0" y="261.3" width="3" height="7.5" fill="#f0843a"/><line x1="159.5" y1="255.4" x2="159.5" y2="272.6" stroke="#f0843a" stroke-width="1"/><rect x="158.5" y="265.1" width="2" height="6.7" fill="#3a414a" stroke="#f0843a" stroke-width="1"/><line x1="162.5" y1="265.8" x2="162.5" y2="272.6" stroke="#f0843a" stroke-width="1"/><rect x="161.0" y="266.6" width="3" height="5.2" fill="#f0843a"/><line x1="165.5" y1="265.8" x2="165.5" y2="278.6" stroke="#f0843a" stroke-width="1"/><rect x="164.5" y="268.8" width="2" height="6.0" fill="#3a414a" stroke="#f0843a" stroke-width="1"/><line x1="168.5" y1="268.8" x2="168.5" y2="277.8" stroke="#f0843a" stroke-width="1"/><rect x="167.0" y="271.8" width="3" height="3.0" fill="#f0843a"/><line x1="172.5" y1="262.8" x2="172.5" y2="271.8" stroke="#f0843a" stroke-width="1"/><rect x="171.0" y="266.6" width="3" height="4.5" fill="#f0843a"/><line x1="174.5" y1="249.4" x2="174.5" y2="268.8" stroke="#f0843a" stroke-width="1"/><rect x="173.0" y="250.9" width="3" height="15.0" fill="#f0843a"/><line x1="179.5" y1="239.6" x2="179.5" y2="256.1" stroke="#f0843a" stroke-width="1"/><rect x="178.5" y="250.9" width="2" height="4.5" fill="#3a414a" stroke="#f0843a" stroke-width="1"/><line x1="182.5" y1="252.4" x2="182.5" y2="256.1" stroke="#f0843a" stroke-width="1"/><rect x="181.0" y="253.1" width="3" height="2.2" fill="#f0843a"/><line x1="185.5" y1="251.6" x2="185.5" y2="256.9" stroke="#f0843a" stroke-width="1"/><rect x="184.0" y="253.1" width="3" height="2.2" fill="#f0843a"/><line x1="189.5" y1="250.9" x2="189.5" y2="256.1" stroke="#f0843a" stroke-width="1"/><rect x="188.5" y="252.4" width="2" height="3.0" fill="#3a414a" stroke="#f0843a" stroke-width="1"/><line x1="192.5" y1="252.4" x2="192.5" y2="256.9" stroke="#f0843a" stroke-width="1"/><rect x="191.0" y="253.1" width="3" height="3.0" fill="#f0843a"/><line x1="195.5" y1="242.6" x2="195.5" y2="257.6" stroke="#f0843a" stroke-width="1"/><rect x="194.0" y="243.4" width="3" height="13.5" fill="#f0843a"/><line x1="198.5" y1="236.6" x2="198.5" y2="266.6" stroke="#f0843a" stroke-width="1"/><rect x="197.5" y="243.4" width="2" height="22.5" fill="#3a414a" stroke="#f0843a" stroke-width="1"/><line x1="201.5" y1="259.9" x2="201.5" y2="268.1" stroke="#f0843a" stroke-width="1"/><rect x="200.0" y="262.8" width="3" height="3.7" fill="#f0843a"/><line x1="204.5" y1="264.3" x2="204.5" y2="268.1" stroke="#f0843a" stroke-width="1"/><rect x="203.0" y="265.8" width="3" height="1.5" fill="#f0843a"/><line x1="209.5" y1="263.6" x2="209.5" y2="271.8" stroke="#f0843a" stroke-width="1"/><rect x="208.5" y="265.1" width="2" height="6.0" fill="#3a414a" stroke="#f0843a" stroke-width="1"/><line x1="212.5" y1="264.3" x2="212.5" y2="272.6" stroke="#f0843a" stroke-width="1"/><rect x="211.0" y="265.8" width="3" height="6.0" fill="#f0843a"/><line x1="215.5" y1="266.6" x2="215.5" y2="278.6" stroke="#f0843a" stroke-width="1"/><rect x="214.5" y="269.6" width="2" height="8.2" fill="#3a414a" stroke="#f0843a" stroke-width="1"/><line x1="219.5" y1="266.6" x2="219.5" y2="279.3" stroke="#f0843a" stroke-width="1"/><rect x="218.5" y="274.8" width="2" height="3.7" fill="#3a414a" stroke="#f0843a" stroke-width="1"/><line x1="222.5" y1="269.6" x2="222.5" y2="279.3" stroke="#f0843a" stroke-width="1"/><rect x="221.0" y="271.8" width="3" height="6.7" fill="#f0843a"/><line x1="225.5" y1="268.8" x2="225.5" y2="274.8" stroke="#f0843a" stroke-width="1"/><rect x="224.0" y="270.3" width="3" height="3.0" fill="#f0843a"/><line x1="228.5" y1="268.8" x2="228.5" y2="272.6" stroke="#f0843a" stroke-width="1"/><rect x="227.0" y="270.3" width="3" height="1.5" fill="#f0843a"/><line x1="232.5" y1="264.3" x2="232.5" y2="276.3" stroke="#f0843a" stroke-width="1"/><rect x="231.0" y="266.6" width="3" height="2.2" fill="#f0843a"/><line x1="235.5" y1="256.9" x2="235.5" y2="276.3" stroke="#f0843a" stroke-width="1"/><rect x="234.0" y="262.8" width="3" height="4.5" fill="#f0843a"/><line x1="239.5" y1="253.9" x2="239.5" y2="271.8" stroke="#f0843a" stroke-width="1"/><rect x="238.5" y="262.8" width="2" height="8.2" fill="#3a414a" stroke="#f0843a" stroke-width="1"/><line x1="242.5" y1="267.3" x2="242.5" y2="271.1" stroke="#f0843a" stroke-width="1"/><rect x="241.0" y="268.8" width="3" height="1.5" fill="#f0843a"/><line x1="245.5" y1="264.3" x2="245.5" y2="270.3" stroke="#f0843a" stroke-width="1"/><rect x="244.5" y="265.8" width="2" height="3.7" fill="#3a414a" stroke="#f0843a" stroke-width="1"/><line x1="248.5" y1="262.8" x2="248.5" y2="268.8" stroke="#f0843a" stroke-width="1"/><rect x="247.0" y="264.3" width="3" height="3.7" fill="#f0843a"/><line x1="251.5" y1="261.3" x2="251.5" y2="269.6" stroke="#f0843a" stroke-width="1"/><rect x="250.5" y="262.8" width="2" height="6.0" fill="#3a414a" stroke="#f0843a" stroke-width="1"/><line x1="253.5" y1="263.6" x2="253.5" y2="271.1" stroke="#f0843a" stroke-width="1"/><rect x="252.5" y="265.8" width="2" height="4.5" fill="#3a414a" stroke="#f0843a" stroke-width="1"/><line x1="255.5" y1="256.9" x2="255.5" y2="272.6" stroke="#f0843a" stroke-width="1"/><rect x="254.0" y="260.6" width="3" height="7.5" fill="#f0843a"/><line x1="259.5" y1="229.2" x2="259.5" y2="260.6" stroke="#f0843a" stroke-width="1"/><rect x="258.0" y="233.7" width="3" height="26.2" fill="#f0843a"/><line x1="262.5" y1="226.2" x2="262.5" y2="234.4" stroke="#f0843a" stroke-width="1"/><rect x="261.0" y="231.4" width="3" height="1.5" fill="#f0843a"/><line x1="266.5" y1="226.9" x2="266.5" y2="234.4" stroke="#f0843a" stroke-width="1"/><rect x="265.0" y="229.9" width="3" height="1.5" fill="#f0843a"/><line x1="269.5" y1="227.7" x2="269.5" y2="235.1" stroke="#f0843a" stroke-width="1"/><rect x="268.5" y="228.4" width="2" height="6.0" fill="#3a414a" stroke="#f0843a" stroke-width="1"/><line x1="272.5" y1="216.4" x2="272.5" y2="234.4" stroke="#f0843a" stroke-width="1"/><rect x="271.0" y="219.4" width="3" height="13.5" fill="#f0843a"/><line x1="276.5" y1="208.2" x2="276.5" y2="222.4" stroke="#f0843a" stroke-width="1"/><rect x="275.0" y="217.9" width="3" height="1.5" fill="#f0843a"/><line x1="279.5" y1="216.4" x2="279.5" y2="226.9" stroke="#f0843a" stroke-width="1"/><rect x="278.5" y="217.9" width="2" height="7.5" fill="#3a414a" stroke="#f0843a" stroke-width="1"/><line x1="282.5" y1="216.4" x2="282.5" y2="229.9" stroke="#f0843a" stroke-width="1"/><rect x="281.5" y="225.4" width="2" height="3.7" fill="#3a414a" stroke="#f0843a" stroke-width="1"/><line x1="286.5" y1="220.9" x2="286.5" y2="229.9" stroke="#f0843a" stroke-width="1"/><rect x="285.0" y="223.2" width="3" height="5.2" fill="#f0843a"/><line x1="289.5" y1="219.4" x2="289.5" y2="223.9" stroke="#f0843a" stroke-width="1"/><rect x="288.0" y="220.2" width="3" height="1.5" fill="#f0843a"/><line x1="292.5" y1="214.2" x2="292.5" y2="223.2" stroke="#f0843a" stroke-width="1"/><rect x="291.0" y="220.9" width="3" height="1.5" fill="#f0843a"/><line x1="296.5" y1="212.7" x2="296.5" y2="222.4" stroke="#f0843a" stroke-width="1"/><rect x="295.0" y="213.4" width="3" height="8.2" fill="#f0843a"/><line x1="299.5" y1="200.0" x2="299.5" y2="214.2" stroke="#f0843a" stroke-width="1"/><rect x="298.0" y="210.4" width="3" height="2.2" fill="#f0843a"/><line x1="302.5" y1="202.2" x2="302.5" y2="211.2" stroke="#f0843a" stroke-width="1"/><rect x="301.0" y="203.0" width="3" height="7.5" fill="#f0843a"/><line x1="306.5" y1="206.7" x2="306.5" y2="213.4" stroke="#f0843a" stroke-width="1"/><rect x="305.5" y="207.5" width="2" height="5.2" fill="#3a414a" stroke="#f0843a" stroke-width="1"/><line x1="309.5" y1="210.4" x2="309.5" y2="216.4" stroke="#f0843a" stroke-width="1"/><rect x="308.5" y="211.9" width="2" height="3.7" fill="#3a414a" stroke="#f0843a" stroke-width="1"/><line x1="312.5" y1="207.5" x2="312.5" y2="217.2" stroke="#f0843a" stroke-width="1"/><rect x="311.0" y="211.9" width="3" height="2.2" fill="#f0843a"/><line x1="316.5" y1="196.2" x2="316.5" y2="214.9" stroke="#f0843a" stroke-width="1"/><rect x="315.0" y="203.0" width="3" height="6.7" fill="#f0843a"/><line x1="319.5" y1="201.5" x2="319.5" y2="222.4" stroke="#f0843a" stroke-width="1"/><rect x="318.5" y="202.2" width="2" height="14.2" fill="#3a414a" stroke="#f0843a" stroke-width="1"/><line x1="322.5" y1="210.4" x2="322.5" y2="221.7" stroke="#f0843a" stroke-width="1"/><rect x="321.5" y="211.2" width="2" height="8.2" fill="#3a414a" stroke="#f0843a" stroke-width="1"/><line x1="326.5" y1="216.4" x2="326.5" y2="220.9" stroke="#f0843a" stroke-width="1"/><rect x="325.0" y="217.2" width="3" height="2.2" fill="#f0843a"/><line x1="329.5" y1="217.9" x2="329.5" y2="226.2" stroke="#f0843a" stroke-width="1"/><rect x="328.5" y="218.7" width="2" height="6.7" fill="#3a414a" stroke="#f0843a" stroke-width="1"/><line x1="332.5" y1="225.4" x2="332.5" y2="238.1" stroke="#f0843a" stroke-width="1"/><rect x="331.5" y="226.2" width="2" height="11.2" fill="#3a414a" stroke="#f0843a" stroke-width="1"/><line x1="336.5" y1="231.4" x2="336.5" y2="241.9" stroke="#f0843a" stroke-width="1"/><rect x="335.0" y="235.9" width="3" height="3.0" fill="#f0843a"/><line x1="339.5" y1="234.4" x2="339.5" y2="242.6" stroke="#f0843a" stroke-width="1"/><rect x="338.5" y="236.6" width="2" height="3.7" fill="#3a414a" stroke="#f0843a" stroke-width="1"/><line x1="342.5" y1="235.1" x2="342.5" y2="240.4" stroke="#f0843a" stroke-width="1"/><rect x="341.0" y="236.6" width="3" height="3.0" fill="#f0843a"/><line x1="346.5" y1="233.7" x2="346.5" y2="238.9" stroke="#f0843a" stroke-width="1"/><rect x="345.0" y="235.1" width="3" height="2.2" fill="#f0843a"/><line x1="349.5" y1="235.9" x2="349.5" y2="241.1" stroke="#f0843a" stroke-width="1"/><rect x="348.5" y="237.4" width="2" height="3.0" fill="#3a414a" stroke="#f0843a" stroke-width="1"/><line x1="352.5" y1="238.1" x2="352.5" y2="247.9" stroke="#f0843a" stroke-width="1"/><rect x="351.0" y="238.9" width="3" height="1.8" fill="#f0843a"/><line x1="356.5" y1="231.4" x2="356.5" y2="241.1" stroke="#f0843a" stroke-width="1"/><rect x="355.5" y="235.9" width="2" height="4.5" fill="#3a414a" stroke="#f0843a" stroke-width="1"/><line x1="359.5" y1="232.9" x2="359.5" y2="239.6" stroke="#f0843a" stroke-width="1"/><rect x="358.0" y="235.1" width="3" height="3.7" fill="#f0843a"/><line x1="363.5" y1="235.1" x2="363.5" y2="239.6" stroke="#f0843a" stroke-width="1"/><rect x="362.0" y="236.6" width="3" height="2.2" fill="#f0843a"/><line x1="366.5" y1="231.4" x2="366.5" y2="238.9" stroke="#f0843a" stroke-width="1"/><rect x="365.0" y="233.7" width="3" height="4.5" fill="#f0843a"/><line x1="369.5" y1="227.7" x2="369.5" y2="232.2" stroke="#f0843a" stroke-width="1"/><rect x="368.0" y="229.2" width="3" height="2.2" fill="#f0843a"/><line x1="372.5" y1="214.2" x2="372.5" y2="230.7" stroke="#f0843a" stroke-width="1"/><rect x="371.0" y="216.4" width="3" height="13.5" fill="#f0843a"/><line x1="376.5" y1="206.6" x2="376.5" y2="217.1" stroke="#f0843a" stroke-width="1"/><rect x="375.0" y="211.8" width="3" height="3.7" fill="#f0843a"/><line x1="379.5" y1="202.8" x2="379.5" y2="213.3" stroke="#f0843a" stroke-width="1"/><rect x="378.0" y="209.6" width="3" height="2.2" fill="#f0843a"/><line x1="382.5" y1="201.3" x2="382.5" y2="211.1" stroke="#f0843a" stroke-width="1"/><rect x="381.0" y="207.3" width="3" height="1.5" fill="#f0843a"/><line x1="386.5" y1="205.1" x2="386.5" y2="212.6" stroke="#f0843a" stroke-width="1"/><rect x="385.5" y="206.6" width="2" height="5.2" fill="#3a414a" stroke="#f0843a" stroke-width="1"/><line x1="389.5" y1="208.8" x2="389.5" y2="217.1" stroke="#f0843a" stroke-width="1"/><rect x="388.5" y="210.3" width="2" height="6.0" fill="#3a414a" stroke="#f0843a" stroke-width="1"/><line x1="392.5" y1="208.1" x2="392.5" y2="218.6" stroke="#f0843a" stroke-width="1"/><rect x="391.5" y="211.8" width="2" height="6.0" fill="#3a414a" stroke="#f0843a" stroke-width="1"/><line x1="396.5" y1="187.1" x2="396.5" y2="217.1" stroke="#f0843a" stroke-width="1"/><rect x="395.0" y="202.1" width="3" height="14.2" fill="#f0843a"/><line x1="399.5" y1="193.1" x2="399.5" y2="211.1" stroke="#f0843a" stroke-width="1"/><rect x="398.5" y="200.6" width="2" height="9.7" fill="#3a414a" stroke="#f0843a" stroke-width="1"/><line x1="402.5" y1="196.9" x2="402.5" y2="211.1" stroke="#f0843a" stroke-width="1"/><rect x="401.0" y="199.9" width="3" height="10.5" fill="#f0843a"/><line x1="406.5" y1="190.1" x2="406.5" y2="199.1" stroke="#f0843a" stroke-width="1"/><rect x="405.0" y="193.1" width="3" height="5.2" fill="#f0843a"/><line x1="409.5" y1="186.4" x2="409.5" y2="199.9" stroke="#f0843a" stroke-width="1"/><rect x="408.5" y="192.4" width="2" height="4.5" fill="#3a414a" stroke="#f0843a" stroke-width="1"/><line x1="412.5" y1="188.6" x2="412.5" y2="203.6" stroke="#f0843a" stroke-width="1"/><rect x="411.5" y="196.9" width="2" height="3.0" fill="#3a414a" stroke="#f0843a" stroke-width="1"/><line x1="416.5" y1="189.4" x2="416.5" y2="203.6" stroke="#f0843a" stroke-width="1"/><rect x="415.0" y="193.1" width="3" height="6.7" fill="#f0843a"/><line x1="419.5" y1="169.9" x2="419.5" y2="193.1" stroke="#f0843a" stroke-width="1"/><rect x="418.0" y="170.7" width="3" height="21.7" fill="#f0843a"/><line x1="423.5" y1="166.2" x2="423.5" y2="176.6" stroke="#f0843a" stroke-width="1"/><rect x="422.0" y="170.7" width="3" height="2.2" fill="#f0843a"/><line x1="426.5" y1="169.2" x2="426.5" y2="175.1" stroke="#f0843a" stroke-width="1"/><rect x="425.5" y="171.4" width="2" height="2.2" fill="#3a414a" stroke="#f0843a" stroke-width="1"/><line x1="429.5" y1="163.2" x2="429.5" y2="174.4" stroke="#f0843a" stroke-width="1"/><rect x="428.0" y="165.4" width="3" height="7.5" fill="#f0843a"/><line x1="433.5" y1="156.4" x2="433.5" y2="169.2" stroke="#f0843a" stroke-width="1"/><rect x="432.0" y="158.7" width="3" height="5.2" fill="#f0843a"/><line x1="436.5" y1="147.5" x2="436.5" y2="158.7" stroke="#f0843a" stroke-width="1"/><rect x="435.0" y="154.2" width="3" height="3.0" fill="#f0843a"/><line x1="439.5" y1="151.9" x2="439.5" y2="169.2" stroke="#f0843a" stroke-width="1"/><rect x="438.5" y="152.7" width="2" height="12.0" fill="#3a414a" stroke="#f0843a" stroke-width="1"/><line x1="443.5" y1="157.2" x2="443.5" y2="171.4" stroke="#f0843a" stroke-width="1"/><rect x="442.5" y="162.4" width="2" height="2.2" fill="#3a414a" stroke="#f0843a" stroke-width="1"/><line x1="446.5" y1="157.2" x2="446.5" y2="164.7" stroke="#f0843a" stroke-width="1"/><rect x="445.0" y="158.7" width="3" height="3.7" fill="#f0843a"/><line x1="449.5" y1="149.7" x2="449.5" y2="157.9" stroke="#f0843a" stroke-width="1"/><rect x="448.0" y="153.4" width="3" height="3.0" fill="#f0843a"/><line x1="453.5" y1="144.5" x2="453.5" y2="154.9" stroke="#f0843a" stroke-width="1"/><rect x="452.0" y="150.7" width="3" height="1.5" fill="#f0843a"/><line x1="456.5" y1="148.2" x2="456.5" y2="164.7" stroke="#f0843a" stroke-width="1"/><rect x="455.5" y="149.7" width="2" height="11.2" fill="#3a414a" stroke="#f0843a" stroke-width="1"/><line x1="459.5" y1="151.2" x2="459.5" y2="163.9" stroke="#f0843a" stroke-width="1"/><rect x="458.5" y="155.7" width="2" height="4.5" fill="#3a414a" stroke="#f0843a" stroke-width="1"/><line x1="463.5" y1="150.4" x2="463.5" y2="154.2" stroke="#f0843a" stroke-width="1"/><rect x="462.0" y="151.9" width="3" height="1.5" fill="#f0843a"/><line x1="466.5" y1="149.0" x2="466.5" y2="154.9" stroke="#f0843a" stroke-width="1"/><rect x="465.0" y="151.9" width="3" height="1.5" fill="#f0843a"/><line x1="469.5" y1="151.2" x2="469.5" y2="157.2" stroke="#f0843a" stroke-width="1"/><rect x="468.5" y="151.9" width="2" height="4.5" fill="#3a414a" stroke="#f0843a" stroke-width="1"/><line x1="473.5" y1="137.7" x2="473.5" y2="157.9" stroke="#f0843a" stroke-width="1"/><rect x="472.0" y="140.0" width="3" height="15.0" fill="#f0843a"/><line x1="476.5" y1="132.5" x2="476.5" y2="143.0" stroke="#f0843a" stroke-width="1"/><rect x="475.0" y="139.7" width="3" height="1.5" fill="#f0843a"/><line x1="479.5" y1="129.5" x2="479.5" y2="141.5" stroke="#f0843a" stroke-width="1"/><rect x="478.0" y="138.2" width="3" height="1.8" fill="#f0843a"/><line x1="483.5" y1="134.0" x2="483.5" y2="142.2" stroke="#f0843a" stroke-width="1"/><rect x="482.5" y="137.0" width="2" height="2.2" fill="#3a414a" stroke="#f0843a" stroke-width="1"/><line x1="486.5" y1="128.7" x2="486.5" y2="140.7" stroke="#f0843a" stroke-width="1"/><rect x="485.0" y="131.0" width="3" height="7.5" fill="#f0843a"/><line x1="489.5" y1="125.0" x2="489.5" y2="134.0" stroke="#f0843a" stroke-width="1"/><rect x="488.0" y="128.0" width="3" height="3.0" fill="#f0843a"/><line x1="493.5" y1="117.8" x2="493.5" y2="131.3" stroke="#f0843a" stroke-width="1"/><rect x="492.5" y="119.3" width="2" height="10.5" fill="#3a414a" stroke="#f0843a" stroke-width="1"/><line x1="496.5" y1="117.8" x2="496.5" y2="134.3" stroke="#f0843a" stroke-width="1"/><rect x="495.5" y="125.3" width="2" height="7.5" fill="#3a414a" stroke="#f0843a" stroke-width="1"/><line x1="499.5" y1="108.9" x2="499.5" y2="132.8" stroke="#f0843a" stroke-width="1"/><rect x="498.0" y="116.3" width="3" height="15.0" fill="#f0843a"/><line x1="503.5" y1="107.4" x2="503.5" y2="117.8" stroke="#f0843a" stroke-width="1"/><rect x="502.0" y="114.9" width="3" height="1.5" fill="#f0843a"/><line x1="506.5" y1="114.9" x2="506.5" y2="122.3" stroke="#f0843a" stroke-width="1"/><rect x="505.5" y="116.3" width="2" height="4.5" fill="#3a414a" stroke="#f0843a" stroke-width="1"/><line x1="509.5" y1="118.6" x2="509.5" y2="124.6" stroke="#f0843a" stroke-width="1"/><rect x="508.5" y="120.8" width="2" height="2.2" fill="#3a414a" stroke="#f0843a" stroke-width="1"/><line x1="513.5" y1="120.8" x2="513.5" y2="130.6" stroke="#f0843a" stroke-width="1"/><rect x="512.5" y="122.3" width="2" height="3.0" fill="#3a414a" stroke="#f0843a" stroke-width="1"/><line x1="516.5" y1="101.4" x2="516.5" y2="130.6" stroke="#f0843a" stroke-width="1"/><rect x="515.0" y="115.6" width="3" height="9.7" fill="#f0843a"/><line x1="519.5" y1="67.7" x2="519.5" y2="118.6" stroke="#f0843a" stroke-width="1"/><rect x="518.0" y="83.4" width="3" height="30.7" fill="#f0843a"/><line x1="523.5" y1="69.2" x2="523.5" y2="82.7" stroke="#f0843a" stroke-width="1"/><rect x="522.0" y="79.7" width="3" height="1.5" fill="#f0843a"/><line x1="526.5" y1="75.2" x2="526.5" y2="81.9" stroke="#f0843a" stroke-width="1"/><rect x="525.0" y="78.9" width="3" height="1.5" fill="#f0843a"/><line x1="529.5" y1="71.4" x2="529.5" y2="82.7" stroke="#f0843a" stroke-width="1"/><rect x="528.0" y="75.9" width="3" height="3.7" fill="#f0843a"/><line x1="533.5" y1="61.0" x2="533.5" y2="77.4" stroke="#f0843a" stroke-width="1"/><rect x="532.0" y="75.2" width="3" height="1.5" fill="#f0843a"/><line x1="536.5" y1="75.2" x2="536.5" y2="83.4" stroke="#f0843a" stroke-width="1"/><rect x="535.5" y="75.9" width="2" height="6.7" fill="#3a414a" stroke="#f0843a" stroke-width="1"/><line x1="539.5" y1="81.9" x2="539.5" y2="97.6" stroke="#f0843a" stroke-width="1"/><rect x="538.5" y="82.7" width="2" height="10.5" fill="#3a414a" stroke="#f0843a" stroke-width="1"/><line x1="543.5" y1="91.6" x2="543.5" y2="101.4" stroke="#f0843a" stroke-width="1"/><rect x="542.5" y="95.4" width="2" height="5.2" fill="#3a414a" stroke="#f0843a" stroke-width="1"/><line x1="546.5" y1="84.9" x2="546.5" y2="93.1" stroke="#f0843a" stroke-width="1"/><rect x="545.5" y="86.4" width="2" height="6.0" fill="#3a414a" stroke="#f0843a" stroke-width="1"/><line x1="549.5" y1="91.6" x2="549.5" y2="97.6" stroke="#f0843a" stroke-width="1"/><rect x="548.5" y="92.4" width="2" height="4.5" fill="#3a414a" stroke="#f0843a" stroke-width="1"/><line x1="553.5" y1="84.9" x2="553.5" y2="96.9" stroke="#f0843a" stroke-width="1"/><rect x="552.0" y="92.4" width="3" height="3.0" fill="#f0843a"/><line x1="556.5" y1="88.7" x2="556.5" y2="102.9" stroke="#f0843a" stroke-width="1"/><rect x="555.5" y="90.9" width="2" height="4.5" fill="#3a414a" stroke="#f0843a" stroke-width="1"/><line x1="559.5" y1="85.7" x2="559.5" y2="96.1" stroke="#f0843a" stroke-width="1"/><rect x="558.0" y="93.1" width="3" height="2.2" fill="#f0843a"/><line x1="563.5" y1="89.4" x2="563.5" y2="94.6" stroke="#f0843a" stroke-width="1"/><rect x="562.0" y="93.1" width="3" height="1.5" fill="#f0843a"/><line x1="566.5" y1="85.7" x2="566.5" y2="93.9" stroke="#f0843a" stroke-width="1"/><rect x="565.0" y="90.9" width="3" height="2.2" fill="#f0843a"/><line x1="569.5" y1="90.1" x2="569.5" y2="98.4" stroke="#f0843a" stroke-width="1"/><rect x="568.5" y="90.9" width="2" height="6.7" fill="#3a414a" stroke="#f0843a" stroke-width="1"/><line x1="573.5" y1="91.6" x2="573.5" y2="112.6" stroke="#f0843a" stroke-width="1"/><rect x="572.5" y="96.9" width="2" height="9.0" fill="#3a414a" stroke="#f0843a" stroke-width="1"/><line x1="576.5" y1="91.6" x2="576.5" y2="108.1" stroke="#f0843a" stroke-width="1"/><rect x="575.0" y="93.1" width="3" height="14.2" fill="#f0843a"/><line x1="579.5" y1="67.7" x2="579.5" y2="93.1" stroke="#f0843a" stroke-width="1"/><rect x="578.0" y="78.2" width="3" height="13.5" fill="#f0843a"/><line x1="583.5" y1="72.2" x2="583.5" y2="80.4" stroke="#f0843a" stroke-width="1"/><rect x="582.0" y="76.7" width="3" height="1.5" fill="#f0843a"/><line x1="586.5" y1="75.2" x2="586.5" y2="81.2" stroke="#f0843a" stroke-width="1"/><rect x="585.0" y="75.9" width="3" height="1.5" fill="#f0843a"/><line x1="590.5" y1="75.2" x2="590.5" y2="78.9" stroke="#f0843a" stroke-width="1"/><rect x="589.0" y="76.7" width="3" height="1.5" fill="#f0843a"/><line x1="593.5" y1="64.0" x2="593.5" y2="77.4" stroke="#f0843a" stroke-width="1"/><rect x="592.0" y="68.4" width="3" height="8.2" fill="#f0843a"/><line x1="596.5" y1="58.7" x2="596.5" y2="71.4" stroke="#f0843a" stroke-width="1"/><rect x="595.0" y="64.7" width="3" height="1.5" fill="#f0843a"/><line x1="600.5" y1="59.5" x2="600.5" y2="74.4" stroke="#f0843a" stroke-width="1"/><rect x="599.5" y="62.5" width="2" height="11.2" fill="#3a414a" stroke="#f0843a" stroke-width="1"/><line x1="603.5" y1="46.7" x2="603.5" y2="83.4" stroke="#f0843a" stroke-width="1"/><rect x="602.0" y="66.2" width="3" height="6.0" fill="#f0843a"/><line x1="606.5" y1="58.0" x2="606.5" y2="68.4" stroke="#f0843a" stroke-width="1"/><rect x="605.0" y="62.5" width="3" height="1.5" fill="#f0843a"/><line x1="610.5" y1="58.7" x2="610.5" y2="76.7" stroke="#f0843a" stroke-width="1"/><rect x="609.5" y="61.0" width="2" height="12.7" fill="#3a414a" stroke="#f0843a" stroke-width="1"/><line x1="613.5" y1="58.0" x2="613.5" y2="72.2" stroke="#f0843a" stroke-width="1"/><rect x="612.0" y="59.5" width="3" height="12.0" fill="#f0843a"/><line x1="616.5" y1="54.2" x2="616.5" y2="83.4" stroke="#f0843a" stroke-width="1"/><rect x="615.5" y="59.5" width="2" height="10.5" fill="#3a414a" stroke="#f0843a" stroke-width="1"/><line x1="620.5" y1="54.2" x2="620.5" y2="74.4" stroke="#f0843a" stroke-width="1"/><rect x="619.0" y="69.9" width="3" height="3.7" fill="#f0843a"/><line x1="623.5" y1="69.2" x2="623.5" y2="96.9" stroke="#f0843a" stroke-width="1"/><rect x="622.5" y="69.9" width="2" height="26.2" fill="#3a414a" stroke="#f0843a" stroke-width="1"/><line x1="626.5" y1="90.1" x2="626.5" y2="99.1" stroke="#f0843a" stroke-width="1"/><rect x="625.5" y="92.4" width="2" height="6.0" fill="#3a414a" stroke="#f0843a" stroke-width="1"/><line x1="630.5" y1="92.4" x2="630.5" y2="100.6" stroke="#f0843a" stroke-width="1"/><rect x="629.0" y="94.6" width="3" height="3.0" fill="#f0843a"/><line x1="633.5" y1="75.9" x2="633.5" y2="93.9" stroke="#f0843a" stroke-width="1"/><rect x="632.0" y="84.2" width="3" height="9.0" fill="#f0843a"/><line x1="636.5" y1="81.2" x2="636.5" y2="94.6" stroke="#f0843a" stroke-width="1"/><rect x="635.0" y="83.4" width="3" height="7.5" fill="#f0843a"/><line x1="640.5" y1="82.7" x2="640.5" y2="115.6" stroke="#f0843a" stroke-width="1"/><rect x="639.5" y="89.4" width="2" height="25.4" fill="#3a414a" stroke="#f0843a" stroke-width="1"/><line x1="643.5" y1="105.9" x2="643.5" y2="123.8" stroke="#f0843a" stroke-width="1"/><rect x="642.5" y="106.6" width="2" height="8.2" fill="#3a414a" stroke="#f0843a" stroke-width="1"/><line x1="646.5" y1="104.4" x2="646.5" y2="113.4" stroke="#f0843a" stroke-width="1"/><rect x="645.5" y="105.9" width="2" height="6.0" fill="#3a414a" stroke="#f0843a" stroke-width="1"/><line x1="650.5" y1="102.1" x2="650.5" y2="111.1" stroke="#f0843a" stroke-width="1"/><rect x="649.0" y="107.4" width="3" height="2.2" fill="#f0843a"/><line x1="653.5" y1="103.6" x2="653.5" y2="118.6" stroke="#f0843a" stroke-width="1"/><rect x="652.5" y="105.9" width="2" height="6.0" fill="#3a414a" stroke="#f0843a" stroke-width="1"/><line x1="656.5" y1="103.6" x2="656.5" y2="113.4" stroke="#f0843a" stroke-width="1"/><rect x="655.5" y="104.4" width="2" height="8.2" fill="#3a414a" stroke="#f0843a" stroke-width="1"/><line x1="660.5" y1="96.1" x2="660.5" y2="112.6" stroke="#f0843a" stroke-width="1"/><rect x="659.0" y="97.6" width="3" height="12.7" fill="#f0843a"/><line x1="663.5" y1="79.7" x2="663.5" y2="96.9" stroke="#f0843a" stroke-width="1"/><rect x="662.0" y="84.9" width="3" height="10.5" fill="#f0843a"/><line x1="666.5" y1="76.7" x2="666.5" y2="84.9" stroke="#f0843a" stroke-width="1"/><rect x="665.0" y="81.2" width="3" height="3.0" fill="#f0843a"/><line x1="670.5" y1="72.9" x2="670.5" y2="82.7" stroke="#f0843a" stroke-width="1"/><rect x="669.0" y="79.7" width="3" height="1.5" fill="#f0843a"/><line x1="673.5" y1="72.2" x2="673.5" y2="83.4" stroke="#f0843a" stroke-width="1"/><rect x="672.5" y="78.2" width="2" height="4.5" fill="#3a414a" stroke="#f0843a" stroke-width="1"/><line x1="676.5" y1="75.9" x2="676.5" y2="93.1" stroke="#f0843a" stroke-width="1"/><rect x="675.5" y="78.2" width="2" height="13.5" fill="#3a414a" stroke="#f0843a" stroke-width="1"/><line x1="680.5" y1="90.9" x2="680.5" y2="117.8" stroke="#f0843a" stroke-width="1"/><rect x="679.5" y="91.6" width="2" height="11.2" fill="#3a414a" stroke="#f0843a" stroke-width="1"/><line x1="683.5" y1="102.1" x2="683.5" y2="107.4" stroke="#f0843a" stroke-width="1"/><rect x="682.0" y="102.9" width="3" height="2.2" fill="#f0843a"/><line x1="686.5" y1="100.6" x2="686.5" y2="110.4" stroke="#f0843a" stroke-width="1"/><rect x="685.0" y="103.6" width="3" height="1.5" fill="#f0843a"/><line x1="690.5" y1="100.6" x2="690.5" y2="108.9" stroke="#f0843a" stroke-width="1"/><rect x="689.0" y="102.9" width="3" height="1.5" fill="#f0843a"/><line x1="693.5" y1="92.4" x2="693.5" y2="108.9" stroke="#f0843a" stroke-width="1"/><rect x="692.5" y="92.4" width="2" height="10.5" fill="#3a414a" stroke="#f0843a" stroke-width="1"/><line x1="696.5" y1="105.9" x2="696.5" y2="119.3" stroke="#f0843a" stroke-width="1"/><rect x="695.5" y="106.6" width="2" height="9.0" fill="#3a414a" stroke="#f0843a" stroke-width="1"/><line x1="700.5" y1="109.6" x2="700.5" y2="125.3" stroke="#f0843a" stroke-width="1"/><rect x="699.5" y="114.1" width="2" height="3.0" fill="#3a414a" stroke="#f0843a" stroke-width="1"/><line x1="703.5" y1="110.4" x2="703.5" y2="117.8" stroke="#f0843a" stroke-width="1"/><rect x="702.0" y="113.4" width="3" height="1.5" fill="#f0843a"/><line x1="707.5" y1="110.4" x2="707.5" y2="114.9" stroke="#f0843a" stroke-width="1"/><rect x="706.0" y="112.6" width="3" height="1.5" fill="#f0843a"/><line x1="711.5" y1="105.1" x2="711.5" y2="119.3" stroke="#f0843a" stroke-width="1"/><rect x="710.0" y="108.9" width="3" height="3.0" fill="#f0843a"/><line x1="714.5" y1="104.4" x2="714.5" y2="114.9" stroke="#f0843a" stroke-width="1"/><rect x="713.5" y="107.4" width="2" height="6.7" fill="#3a414a" stroke="#f0843a" stroke-width="1"/><line x1="717.5" y1="105.9" x2="717.5" y2="122.3" stroke="#f0843a" stroke-width="1"/><rect x="716.5" y="110.4" width="2" height="7.5" fill="#3a414a" stroke="#f0843a" stroke-width="1"/><line x1="720.5" y1="117.1" x2="720.5" y2="131.3" stroke="#f0843a" stroke-width="1"/><rect x="719.5" y="117.8" width="2" height="12.7" fill="#3a414a" stroke="#f0843a" stroke-width="1"/><line x1="723.5" y1="124.6" x2="723.5" y2="133.6" stroke="#f0843a" stroke-width="1"/><rect x="722.0" y="128.3" width="3" height="1.5" fill="#f0843a"/><line x1="726.5" y1="122.3" x2="726.5" y2="128.3" stroke="#f0843a" stroke-width="1"/><rect x="725.0" y="125.3" width="3" height="2.2" fill="#f0843a"/><line x1="730.5" y1="122.3" x2="730.5" y2="127.6" stroke="#f0843a" stroke-width="1"/><rect x="729.0" y="124.6" width="3" height="1.5" fill="#f0843a"/><line x1="733.5" y1="118.4" x2="733.5" y2="127.4" stroke="#f0843a" stroke-width="1"/><rect x="732.5" y="119.1" width="2" height="6.7" fill="#3a414a" stroke="#f0843a" stroke-width="1"/><line x1="736.5" y1="106.4" x2="736.5" y2="130.4" stroke="#f0843a" stroke-width="1"/><rect x="735.0" y="109.4" width="3" height="10.5" fill="#f0843a"/><line x1="740.5" y1="112.4" x2="740.5" y2="140.1" stroke="#f0843a" stroke-width="1"/><rect x="739.5" y="115.4" width="2" height="24.0" fill="#3a414a" stroke="#f0843a" stroke-width="1"/><line x1="743.5" y1="128.9" x2="743.5" y2="139.3" stroke="#f0843a" stroke-width="1"/><rect x="742.5" y="130.4" width="2" height="8.2" fill="#3a414a" stroke="#f0843a" stroke-width="1"/><line x1="746.5" y1="130.4" x2="746.5" y2="138.6" stroke="#f0843a" stroke-width="1"/><rect x="745.5" y="131.9" width="2" height="6.0" fill="#3a414a" stroke="#f0843a" stroke-width="1"/><line x1="750.5" y1="125.9" x2="750.5" y2="135.6" stroke="#f0843a" stroke-width="1"/><rect x="749.0" y="128.9" width="3" height="6.0" fill="#f0843a"/><line x1="753.5" y1="119.1" x2="753.5" y2="132.6" stroke="#f0843a" stroke-width="1"/><rect x="752.0" y="119.9" width="3" height="10.5" fill="#f0843a"/><line x1="756.5" y1="116.9" x2="756.5" y2="127.4" stroke="#f0843a" stroke-width="1"/><rect x="755.0" y="118.4" width="3" height="3.0" fill="#f0843a"/><line x1="760.5" y1="101.2" x2="760.5" y2="120.6" stroke="#f0843a" stroke-width="1"/><rect x="759.0" y="107.2" width="3" height="12.7" fill="#f0843a"/><line x1="763.5" y1="103.4" x2="763.5" y2="110.1" stroke="#f0843a" stroke-width="1"/><rect x="762.0" y="104.9" width="3" height="3.0" fill="#f0843a"/><line x1="767.5" y1="98.2" x2="767.5" y2="107.9" stroke="#f0843a" stroke-width="1"/><rect x="766.0" y="104.2" width="3" height="2.2" fill="#f0843a"/><line x1="770.5" y1="100.4" x2="770.5" y2="111.6" stroke="#f0843a" stroke-width="1"/><rect x="769.5" y="103.4" width="2" height="4.5" fill="#3a414a" stroke="#f0843a" stroke-width="1"/><line x1="773.5" y1="89.9" x2="773.5" y2="106.4" stroke="#f0843a" stroke-width="1"/><rect x="772.0" y="95.9" width="3" height="9.7" fill="#f0843a"/><line x1="777.5" y1="79.5" x2="777.5" y2="98.9" stroke="#f0843a" stroke-width="1"/><rect x="776.0" y="82.5" width="3" height="12.0" fill="#f0843a"/><line x1="780.5" y1="72.7" x2="780.5" y2="89.9" stroke="#f0843a" stroke-width="1"/><rect x="779.5" y="81.7" width="2" height="7.5" fill="#3a414a" stroke="#f0843a" stroke-width="1"/><line x1="783.5" y1="85.4" x2="783.5" y2="92.2" stroke="#f0843a" stroke-width="1"/><rect x="782.0" y="86.9" width="3" height="2.2" fill="#f0843a"/><line x1="787.5" y1="82.5" x2="787.5" y2="89.2" stroke="#f0843a" stroke-width="1"/><rect x="786.0" y="86.9" width="3" height="1.5" fill="#f0843a"/><line x1="790.5" y1="82.5" x2="790.5" y2="89.2" stroke="#f0843a" stroke-width="1"/><rect x="789.0" y="86.2" width="3" height="1.5" fill="#f0843a"/><line x1="793.5" y1="82.5" x2="793.5" y2="96.7" stroke="#f0843a" stroke-width="1"/><rect x="792.5" y="86.9" width="2" height="3.0" fill="#3a414a" stroke="#f0843a" stroke-width="1"/><line x1="797.5" y1="87.7" x2="797.5" y2="101.9" stroke="#f0843a" stroke-width="1"/><rect x="796.5" y="90.7" width="2" height="10.5" fill="#3a414a" stroke="#f0843a" stroke-width="1"/><line x1="800.5" y1="98.2" x2="800.5" y2="102.7" stroke="#f0843a" stroke-width="1"/><rect x="799.0" y="99.7" width="3" height="1.5" fill="#f0843a"/><line x1="803.5" y1="99.7" x2="803.5" y2="111.6" stroke="#f0843a" stroke-width="1"/><rect x="802.5" y="100.4" width="2" height="9.7" fill="#3a414a" stroke="#f0843a" stroke-width="1"/><line x1="807.5" y1="107.2" x2="807.5" y2="110.9" stroke="#f0843a" stroke-width="1"/><rect x="806.0" y="107.9" width="3" height="1.5" fill="#f0843a"/><line x1="810.5" y1="106.4" x2="810.5" y2="113.1" stroke="#f0843a" stroke-width="1"/><rect x="809.5" y="107.9" width="2" height="3.0" fill="#3a414a" stroke="#f0843a" stroke-width="1"/><line x1="813.5" y1="110.1" x2="813.5" y2="119.9" stroke="#f0843a" stroke-width="1"/><rect x="812.5" y="110.9" width="2" height="7.5" fill="#3a414a" stroke="#f0843a" stroke-width="1"/><line x1="817.5" y1="117.6" x2="817.5" y2="131.9" stroke="#f0843a" stroke-width="1"/><rect x="816.5" y="118.4" width="2" height="7.5" fill="#3a414a" stroke="#f0843a" stroke-width="1"/><line x1="820.5" y1="116.9" x2="820.5" y2="125.9" stroke="#f0843a" stroke-width="1"/><rect x="819.0" y="119.9" width="3" height="3.0" fill="#f0843a"/><line x1="823.5" y1="116.9" x2="823.5" y2="124.4" stroke="#f0843a" stroke-width="1"/><rect x="822.5" y="119.1" width="2" height="3.7" fill="#3a414a" stroke="#f0843a" stroke-width="1"/><line x1="827.5" y1="119.1" x2="827.5" y2="125.1" stroke="#f0843a" stroke-width="1"/><rect x="826.0" y="120.6" width="3" height="1.5" fill="#f0843a"/><line x1="830.5" y1="119.1" x2="830.5" y2="124.4" stroke="#f0843a" stroke-width="1"/><rect x="829.0" y="119.9" width="3" height="1.5" fill="#f0843a"/><line x1="833.5" y1="113.9" x2="833.5" y2="125.9" stroke="#f0843a" stroke-width="1"/><rect x="832.0" y="115.4" width="3" height="4.5" fill="#f0843a"/><line x1="837.5" y1="115.4" x2="837.5" y2="125.9" stroke="#f0843a" stroke-width="1"/><rect x="836.0" y="116.1" width="3" height="1.5" fill="#f0843a"/><line x1="840.5" y1="114.6" x2="840.5" y2="130.4" stroke="#f0843a" stroke-width="1"/><rect x="839.5" y="116.9" width="2" height="6.0" fill="#3a414a" stroke="#f0843a" stroke-width="1"/><line x1="843.5" y1="116.1" x2="843.5" y2="122.9" stroke="#f0843a" stroke-width="1"/><rect x="842.5" y="117.6" width="2" height="4.5" fill="#3a414a" stroke="#f0843a" stroke-width="1"/><line x1="847.5" y1="117.6" x2="847.5" y2="121.4" stroke="#f0843a" stroke-width="1"/><rect x="846.0" y="119.1" width="3" height="1.5" fill="#f0843a"/><line x1="850.5" y1="113.1" x2="850.5" y2="118.6" stroke="#f0843a" stroke-width="1"/><rect x="849.0" y="114.6" width="3" height="3.5" fill="#f0843a"/><line x1="853.5" y1="103.1" x2="853.5" y2="113.6" stroke="#f0843a" stroke-width="1"/><rect x="852.0" y="109.6" width="3" height="3.5" fill="#f0843a"/><line x1="857.5" y1="95.0" x2="857.5" y2="110.1" stroke="#f0843a" stroke-width="1"/><rect x="856.0" y="98.0" width="3" height="10.0" fill="#f0843a"/><line x1="860.5" y1="96.0" x2="860.5" y2="111.1" stroke="#f0843a" stroke-width="1"/><rect x="859.5" y="96.5" width="2" height="13.5" fill="#3a414a" stroke="#f0843a" stroke-width="1"/><line x1="863.5" y1="113.1" x2="863.5" y2="121.6" stroke="#f0843a" stroke-width="1"/><rect x="862.5" y="114.1" width="2" height="5.0" fill="#3a414a" stroke="#f0843a" stroke-width="1"/><line x1="867.5" y1="108.1" x2="867.5" y2="113.1" stroke="#f0843a" stroke-width="1"/><rect x="866.0" y="111.1" width="3" height="1.5" fill="#f0843a"/><line x1="870.5" y1="109.1" x2="870.5" y2="115.6" stroke="#f0843a" stroke-width="1"/><rect x="869.0" y="111.6" width="3" height="1.5" fill="#f0843a"/></g><path d="M13.0,255.4 C14.9,254.8 29.5,250.4 32.5,249.4 C35.5,248.4 40.1,245.8 43.0,245.0 C45.9,244.2 58.0,241.4 61.0,241.0 C64.0,240.6 70.3,240.6 73.0,241.0 C75.7,241.4 85.0,244.2 88.0,245.0 C91.0,245.8 100.0,248.6 103.0,249.4 C106.0,250.2 114.8,252.6 117.8,253.0 C120.8,253.4 128.8,252.8 133.0,253.0 C137.2,253.2 156.1,254.9 160.0,255.4 C163.9,255.9 168.7,257.5 172.0,257.6 C175.3,257.8 189.4,256.8 193.0,256.9 C196.6,257.0 204.3,258.0 208.0,258.4 C211.7,258.8 225.8,260.9 230.3,261.3 C234.8,261.7 249.4,263.1 253.0,262.8 C256.6,262.5 262.8,259.6 266.5,258.4 C270.2,257.2 285.8,252.6 290.4,250.9 C295.0,249.2 309.3,243.2 313.0,241.9 C316.7,240.6 324.1,238.5 327.8,238.1 C331.5,237.7 345.8,238.2 350.3,238.1 C354.8,237.9 368.5,237.3 373.0,236.6 C377.5,235.9 390.1,232.6 395.0,231.0 C399.9,229.4 417.3,223.0 422.4,220.8 C427.5,218.6 441.6,211.3 446.4,208.8 C451.2,206.3 465.6,198.1 470.3,195.4 C475.0,192.7 487.6,185.3 493.0,181.9 C498.4,178.5 519.1,165.0 524.6,161.0 C530.1,157.0 544.7,144.0 548.4,141.6 C552.1,139.2 558.2,138.6 561.9,137.0 C565.6,135.4 580.7,128.6 585.8,126.1 C590.9,123.6 608.8,113.9 613.0,111.9 C617.2,110.0 623.5,107.2 628.0,106.6 C632.5,106.0 653.5,106.4 658.0,105.9 C662.5,105.5 669.0,102.4 672.9,102.1 C676.8,101.8 692.3,102.5 696.8,102.9 C701.3,103.3 714.2,105.3 717.8,105.9 C721.4,106.5 730.3,108.1 733.0,108.7 C735.7,109.3 741.4,111.2 745.0,111.6 C748.6,112.0 765.7,112.7 769.0,112.4 C772.3,112.1 775.6,109.3 778.0,108.7 C780.4,108.1 789.9,106.6 792.9,106.4 C795.9,106.2 804.9,106.2 807.9,106.4 C810.9,106.6 819.8,108.3 822.8,108.7 C825.8,109.1 834.8,109.9 837.8,110.1 C840.8,110.3 849.8,110.8 853.0,110.9 C856.2,111.1 868.3,111.5 870.0,111.6" fill="none" stroke="#b0262e" stroke-width="1.25"/><path d="M13.0,254.5 C14.2,253.6 22.0,247.2 25.0,245.0 C28.0,242.8 40.0,233.6 43.0,232.0 C46.0,230.4 52.3,229.1 55.0,229.0 C57.7,228.9 67.0,229.3 70.0,230.7 C73.0,232.1 82.3,240.7 85.0,242.6 C87.7,244.5 93.5,247.6 96.8,249.4 C100.1,251.2 114.2,259.6 117.8,260.6 C121.4,261.7 130.0,260.1 133.0,259.9 C136.0,259.7 144.4,258.0 148.0,258.4 C151.6,258.8 166.0,263.9 169.0,264.3 C172.0,264.7 175.3,263.3 178.0,262.8 C180.7,262.3 193.5,259.3 196.0,259.0 C198.5,258.7 200.7,259.1 203.4,259.9 C206.1,260.7 217.8,265.9 222.8,266.6 C227.8,267.3 248.6,268.0 253.0,267.0 C257.4,266.0 263.5,259.1 266.5,256.9 C269.5,254.7 279.2,247.4 283.0,244.9 C286.8,242.4 300.6,233.4 304.0,231.4 C307.4,229.4 315.2,225.5 317.4,224.7 C319.6,223.9 324.5,223.0 326.4,223.2 C328.3,223.3 333.8,225.4 336.8,226.2 C339.8,226.9 353.6,230.0 356.3,230.7 C359.0,231.4 362.1,233.0 363.8,232.9 C365.5,232.8 369.8,231.2 373.0,230.0 C376.2,228.8 391.2,222.7 395.5,220.8 C399.8,218.9 411.9,214.3 416.4,211.0 C420.9,207.7 435.8,191.9 440.4,187.9 C445.0,183.9 458.5,174.2 462.8,171.4 C467.1,168.6 480.8,161.3 483.8,159.4 C486.8,157.5 489.8,154.3 493.0,152.0 C496.2,149.7 511.8,140.2 515.5,136.6 C519.2,133.0 527.9,118.8 530.4,116.3 C532.9,113.8 537.9,112.4 540.9,111.1 C543.9,109.8 557.1,103.9 560.4,102.9 C563.7,101.9 571.0,102.3 573.8,101.4 C576.6,100.5 585.8,95.6 588.8,93.9 C591.8,92.2 601.4,86.2 603.8,84.9 C606.2,83.6 611.4,81.0 613.0,80.4 C614.6,79.8 618.2,78.7 619.7,78.9 C621.2,79.1 626.3,82.2 628.0,82.7 C629.7,83.2 635.2,82.7 637.0,83.4 C638.8,84.1 643.9,88.2 646.0,89.4 C648.1,90.6 655.0,95.3 658.0,95.4 C661.0,95.5 672.6,90.2 675.9,90.1 C679.2,90.0 687.8,93.5 690.8,94.6 C693.8,95.7 703.1,100.3 705.8,101.4 C708.5,102.5 715.1,104.8 717.8,105.9 C720.5,107.0 730.0,111.1 733.0,112.4 C736.0,113.7 745.3,118.4 748.0,119.1 C750.7,119.8 757.6,119.7 760.0,119.1 C762.4,118.5 768.7,114.7 772.0,113.1 C775.3,111.5 789.9,103.7 792.9,102.7 C795.9,101.7 799.5,102.3 801.9,102.7 C804.3,103.1 813.8,105.4 816.8,106.4 C819.8,107.4 829.5,111.9 832.0,112.6 C834.5,113.3 839.9,113.0 842.0,113.0 C844.1,113.0 850.2,113.0 853.0,113.0 C855.8,113.0 868.3,112.6 870.0,112.6" fill="none" stroke="#1818d0" stroke-width="1.15"/><line x1="446.5" y1="40" x2="446.5" y2="377" stroke="#8c9aa8" stroke-width="1"/><rect x="13" y="40" width="31" height="21.7" fill="#f0f0f0"/><rect x="13" y="40" width="31" height="4" fill="#d2d2d2"/><rect x="17" y="48" width="9.5" height="9.3" rx="1.8" fill="url(#lr)" stroke="#a01010" stroke-width="0.6"/><rect x="30" y="48" width="9.5" height="9.3" rx="1.8" fill="url(#lb)" stroke="#1060a0" stroke-width="0.6"/><rect x="44" y="41.2" width="245" height="13" fill="#3a414a"/><text x="44" y="52.3" font-family="Liberation Sans, sans-serif" font-size="10.6" fill="#2020e0" stroke="#2020e0" stroke-width="0.3" textLength="104.5" lengthAdjust="spacingAndGlyphs">ential_Moving_Average</text><text x="154" y="52.3" font-family="Liberation Sans, sans-serif" font-size="10.6" fill="#e41c1c" stroke="#e41c1c" stroke-width="0.3" textLength="133.5" lengthAdjust="spacingAndGlyphs">Exponential_Moving_Average</text><text x="892" y="63.0" font-family="Liberation Sans, sans-serif" font-size="11" fill="#f4f4f4" stroke="#f4f4f4" stroke-width="0.35" textLength="32.5" lengthAdjust="spacingAndGlyphs">1.1400</text><text x="892" y="99.0" font-family="Liberation Sans, sans-serif" font-size="11" fill="#f4f4f4" stroke="#f4f4f4" stroke-width="0.35" textLength="32.5" lengthAdjust="spacingAndGlyphs">1.1300</text><text x="892" y="134.6" font-family="Liberation Sans, sans-serif" font-size="11" fill="#f4f4f4" stroke="#f4f4f4" stroke-width="0.35" textLength="32.5" lengthAdjust="spacingAndGlyphs">1.1200</text><text x="892" y="171.2" font-family="Liberation Sans, sans-serif" font-size="11" fill="#f4f4f4" stroke="#f4f4f4" stroke-width="0.35" textLength="32.5" lengthAdjust="spacingAndGlyphs">1.1100</text><text x="892" y="207.2" font-family="Liberation Sans, sans-serif" font-size="11" fill="#f4f4f4" stroke="#f4f4f4" stroke-width="0.35" textLength="32.5" lengthAdjust="spacingAndGlyphs">1.1000</text><text x="892" y="243.2" font-family="Liberation Sans, sans-serif" font-size="11" fill="#f4f4f4" stroke="#f4f4f4" stroke-width="0.35" textLength="32.5" lengthAdjust="spacingAndGlyphs">1.0900</text><rect x="884.5" y="104" width="47.5" height="21" fill="#ffffff"/><text x="892.5" y="117.8" font-family="Liberation Sans, sans-serif" font-size="11" fill="#3a414a" textLength="32" lengthAdjust="spacingAndGlyphs">1.1238</text><line x1="13" y1="317" x2="870" y2="317" stroke="#c83030" stroke-width="1.3" stroke-dasharray="2,5" stroke-opacity="0.7"/><line x1="446.5" y1="285" x2="446.5" y2="338.6" stroke="#8c9aa8" stroke-width="1"/><path d="M13.0,318.5 C16.6,317.6 43.6,310.1 49.0,309.0 C54.4,307.9 62.3,307.3 67.0,308.0 C71.7,308.7 89.2,314.6 96.0,316.0 C102.8,317.4 119.1,321.5 135.0,322.0 C150.9,322.5 237.6,322.4 255.0,321.0 C272.4,319.6 302.4,309.4 309.5,308.0 C316.6,306.6 320.4,306.3 326.0,306.7 C331.6,307.1 357.2,311.6 365.0,312.0 C372.8,312.4 396.2,311.5 404.0,310.6 C411.8,309.7 435.2,304.3 443.0,303.0 C450.8,301.7 474.2,298.5 482.0,297.6 C489.8,296.7 514.5,294.5 521.0,293.7 C527.5,292.9 539.1,290.0 547.0,290.0 C554.9,290.0 592.6,293.2 599.5,293.7 C606.4,294.2 613.0,294.6 616.0,295.0 C619.0,295.4 625.9,296.8 629.0,297.6 C632.1,298.4 643.1,301.9 647.0,302.8 C650.9,303.7 663.3,305.9 668.0,306.7 C672.7,307.5 689.3,309.8 694.0,310.6 C698.7,311.4 710.8,313.7 715.0,314.5 C719.2,315.3 732.4,317.9 736.0,318.5 C739.6,319.1 747.9,320.9 751.5,321.0 C755.1,321.1 768.4,320.2 772.0,319.8 C775.6,319.4 784.1,317.5 788.0,317.0 C791.9,316.5 807.4,314.5 811.0,314.5 C814.6,314.5 820.1,316.6 824.0,317.0 C827.9,317.4 845.5,318.3 850.0,318.5 C854.5,318.7 866.7,318.9 868.6,319.0" fill="none" stroke="#1e8a1e" stroke-width="1.5"/><path d="M13.0,317.0 C16.1,316.1 39.7,308.9 44.0,308.0 C48.3,307.1 51.7,307.5 55.6,308.0 C59.5,308.5 77.7,311.6 83.0,313.0 C88.3,314.4 104.3,321.1 109.0,322.0 C113.7,322.9 115.4,322.2 130.0,322.0 C144.6,321.8 238.3,321.4 255.0,320.0 C271.6,318.6 292.0,309.2 296.5,308.0 C301.0,306.8 297.9,308.3 300.0,308.0 C302.1,307.7 314.6,305.4 318.0,305.4 C321.4,305.4 330.6,307.3 334.0,308.0 C337.4,308.7 348.6,311.5 352.0,312.0 C355.4,312.5 364.1,313.1 368.0,313.0 C371.9,312.9 386.1,311.1 391.0,310.6 C395.9,310.1 411.5,309.1 417.0,308.0 C422.5,306.9 439.5,301.0 446.0,300.0 C452.5,299.0 475.0,298.2 482.0,297.6 C489.0,297.0 510.8,294.6 516.0,293.7 C521.2,292.8 529.6,288.6 534.0,288.5 C538.4,288.4 554.8,291.8 560.0,292.4 C565.2,293.0 580.4,294.9 586.0,295.0 C591.6,295.1 611.7,293.3 616.0,293.7 C620.3,294.1 626.1,297.8 629.0,299.0 C631.9,300.2 641.8,304.5 644.7,305.4 C647.6,306.3 654.3,307.7 657.7,308.0 C661.1,308.3 674.9,307.6 678.5,308.0 C682.1,308.4 690.4,311.2 694.0,312.0 C697.6,312.8 711.1,315.2 715.0,316.0 C718.9,316.8 729.9,319.2 733.0,319.8 C736.1,320.4 743.4,321.8 746.0,322.0 C748.6,322.2 756.4,322.2 759.0,322.0 C761.6,321.8 769.4,320.4 772.0,319.8 C774.6,319.2 782.4,316.5 785.0,316.0 C787.6,315.5 794.8,314.4 798.0,314.5 C801.2,314.6 812.7,316.6 816.6,317.0 C820.5,317.4 833.9,318.6 837.0,319.0 C840.1,319.4 845.9,320.5 848.0,320.5 C850.1,320.5 855.8,319.2 858.0,319.0 C860.2,318.8 868.8,318.1 870.0,318.0" fill="none" stroke="#c82828" stroke-width="1.5" stroke-opacity="0.9"/><rect x="14" y="286.3" width="30.5" height="12.5" fill="#3a414a"/><text x="15.5" y="297.5" font-family="Liberation Sans, sans-serif" font-size="11" fill="#d42424" stroke="#d42424" stroke-width="0.3" textLength="28.8" lengthAdjust="spacingAndGlyphs">MACD</text><text x="892.5" y="296.3" font-family="Liberation Sans, sans-serif" font-size="11" fill="#f4f4f4" stroke="#f4f4f4" stroke-width="0.35" textLength="28" lengthAdjust="spacingAndGlyphs">+0.01</text><text x="892.5" y="323.8" font-family="Liberation Sans, sans-serif" font-size="11" fill="#f4f4f4" stroke="#f4f4f4" stroke-width="0.35" textLength="25.5" lengthAdjust="spacingAndGlyphs">-0.00</text><rect x="13" y="356.2" width="857" height="1.7" fill="#1414b4"/><rect x="13" y="395.9" width="857" height="1.7" fill="#1414b4"/><line x1="446.5" y1="344.5" x2="446.5" y2="377" stroke="#8c9aa8" stroke-width="1"/><polyline points="13.0,370.0 20.4,359.5 25.6,358.2 29.5,359.5 36.0,355.6 38.6,354.3 41.0,357.0 49.0,368.6 53.0,367.3 57.0,371.0 62.0,378.0 70.0,385.0 77.7,392.0 85.5,393.4 88.0,390.8 93.0,396.0 98.5,394.7 102.5,396.0 106.0,396.8 110.0,394.7 114.0,396.0 119.0,387.0 124.6,375.0 132.4,377.8 137.6,379.0 142.8,375.0 145.4,380.4 149.0,375.0 153.0,384.0 159.7,385.6 166.0,390.8 171.5,380.4 175.0,368.6 182.0,372.5 187.0,370.0 192.0,372.5 195.4,364.7 200.0,380.0 208.0,380.0 213.0,383.0 218.0,389.5 223.5,381.7 231.0,381.7 235.0,375.0 239.0,380.4 244.0,376.5 249.6,377.8 253.5,380.4 261.0,358.0 264.0,357.0 268.0,359.5 273.0,354.3 277.0,354.3 283.4,362.0 288.6,359.5 294.0,358.0 299.0,355.6 303.0,353.0 306.5,357.0 311.7,360.8 315.6,355.6 319.5,368.6 326.0,371.0 331.0,379.0 339.0,385.6 343.0,380.4 347.0,384.3 350.8,385.6 356.0,380.4 360.0,383.0 367.7,376.5 373.0,364.7 380.7,360.8 388.5,368.6 391.0,368.6 396.0,359.5 400.0,366.0 406.8,359.5 412.0,366.0 415.9,360.8 419.8,353.0 423.7,355.6 430.0,351.7 435.4,349.0 439.3,358.0 445.8,358.0 451.0,354.3 453.6,355.6 456.0,363.4 461.5,359.5 466.7,360.8 470.6,362.0 474.5,355.6 482.3,357.0 490.0,353.0 494.0,351.7 496.6,359.5 500.5,353.0 504.4,354.3 509.6,359.5 514.8,362.0 520.0,347.8 527.9,347.8 531.8,350.4 535.7,359.5 539.6,363.4 543.5,366.0 547.4,363.4 553.9,364.7 560.4,363.4 565.6,366.0 573.4,376.5 580.0,362.0 589.0,362.0 595.0,357.0 600.4,363.4 605.6,359.5 609.5,367.3 613.4,362.0 617.3,368.6 621.3,370.0 625.0,381.7 629.0,380.4 633.0,376.5 636.9,381.7 640.8,389.5 644.7,384.3 648.6,385.6 653.8,383.0 657.7,385.6 661.6,377.8 665.5,371.0 673.3,371.0 679.8,381.7 686.4,383.0 690.3,381.7 694.2,384.3 699.4,389.5 704.6,385.6 707.2,388.2 711.0,383.0 715.0,385.6 720.0,394.7 725.4,390.8 731.9,388.2 737.0,380.4 742.3,392.0 743.6,393.4 750.2,385.6 754.0,380.4 756.7,379.0 760.6,372.5 768.4,371.2 771.0,368.6 777.5,359.5 781.4,364.7 788.0,364.7 793.1,367.3 798.3,375.0 803.5,381.7 810.0,380.4 814.0,384.3 817.9,389.5 821.8,384.3 827.0,386.9 833.5,380.4 837.4,384.3 840.0,381.7 843.9,384.3 849.1,379.0 853.0,372.5 857.0,366.0 860.8,380.4 866.0,376.5 870.0,377.8" fill="none" stroke="#e8862e" stroke-width="1" stroke-linejoin="round"/><polyline points="13.0,370.0 20.4,359.5 25.6,358.2 29.5,359.5 36.0,355.6 38.6,354.3 41.0,357.0 49.0,368.6 53.0,367.3 57.0,371.0 62.0,378.0 70.0,385.0 77.7,392.0 85.5,393.4 88.0,390.8 93.0,396.0 98.5,394.7 102.5,396.0 106.0,396.8 110.0,394.7 114.0,396.0 119.0,387.0 124.6,375.0 132.4,377.8 137.6,379.0 142.8,375.0 145.4,380.4 149.0,375.0 153.0,384.0 159.7,385.6 166.0,390.8 171.5,380.4 175.0,368.6 182.0,372.5 187.0,370.0 192.0,372.5 195.4,364.7 200.0,380.0 208.0,380.0 213.0,383.0 218.0,389.5 223.5,381.7 231.0,381.7 235.0,375.0 239.0,380.4 244.0,376.5 249.6,377.8 253.5,380.4 261.0,358.0 264.0,357.0 268.0,359.5 273.0,354.3 277.0,354.3 283.4,362.0 288.6,359.5 294.0,358.0 299.0,355.6 303.0,353.0 306.5,357.0 311.7,360.8 315.6,355.6 319.5,368.6 326.0,371.0 331.0,379.0 339.0,385.6 343.0,380.4 347.0,384.3 350.8,385.6 356.0,380.4 360.0,383.0 367.7,376.5 373.0,364.7 380.7,360.8 388.5,368.6 391.0,368.6 396.0,359.5 400.0,366.0 406.8,359.5 412.0,366.0 415.9,360.8 419.8,353.0 423.7,355.6 430.0,351.7 435.4,349.0 439.3,358.0 445.8,358.0 451.0,354.3 453.6,355.6 456.0,363.4 461.5,359.5 466.7,360.8 470.6,362.0 474.5,355.6 482.3,357.0 490.0,353.0 494.0,351.7 496.6,359.5 500.5,353.0 504.4,354.3 509.6,359.5 514.8,362.0 520.0,347.8 527.9,347.8 531.8,350.4 535.7,359.5 539.6,363.4 543.5,366.0 547.4,363.4 553.9,364.7 560.4,363.4 565.6,366.0 573.4,376.5 580.0,362.0 589.0,362.0 595.0,357.0 600.4,363.4 605.6,359.5 609.5,367.3 613.4,362.0 617.3,368.6 621.3,370.0 625.0,381.7 629.0,380.4 633.0,376.5 636.9,381.7 640.8,389.5 644.7,384.3 648.6,385.6 653.8,383.0 657.7,385.6 661.6,377.8 665.5,371.0 673.3,371.0 679.8,381.7 686.4,383.0 690.3,381.7 694.2,384.3 699.4,389.5 704.6,385.6 707.2,388.2 711.0,383.0 715.0,385.6 720.0,394.7 725.4,390.8 731.9,388.2 737.0,380.4 742.3,392.0 743.6,393.4 750.2,385.6 754.0,380.4 756.7,379.0 760.6,372.5 768.4,371.2 771.0,368.6 777.5,359.5 781.4,364.7 788.0,364.7 793.1,367.3 798.3,375.0 803.5,381.7 810.0,380.4 814.0,384.3 817.9,389.5 821.8,384.3 827.0,386.9 833.5,380.4 837.4,384.3 840.0,381.7 843.9,384.3 849.1,379.0 853.0,372.5 857.0,366.0 860.8,380.4 866.0,376.5 870.0,377.8" fill="none" stroke="#d030d8" stroke-width="1.2" stroke-linejoin="round" clip-path="url(#cpMag)"/><polyline points="13.0,370.0 20.4,359.5 25.6,358.2 29.5,359.5 36.0,355.6 38.6,354.3 41.0,357.0 49.0,368.6 53.0,367.3 57.0,371.0 62.0,378.0 70.0,385.0 77.7,392.0 85.5,393.4 88.0,390.8 93.0,396.0 98.5,394.7 102.5,396.0 106.0,396.8 110.0,394.7 114.0,396.0 119.0,387.0 124.6,375.0 132.4,377.8 137.6,379.0 142.8,375.0 145.4,380.4 149.0,375.0 153.0,384.0 159.7,385.6 166.0,390.8 171.5,380.4 175.0,368.6 182.0,372.5 187.0,370.0 192.0,372.5 195.4,364.7 200.0,380.0 208.0,380.0 213.0,383.0 218.0,389.5 223.5,381.7 231.0,381.7 235.0,375.0 239.0,380.4 244.0,376.5 249.6,377.8 253.5,380.4 261.0,358.0 264.0,357.0 268.0,359.5 273.0,354.3 277.0,354.3 283.4,362.0 288.6,359.5 294.0,358.0 299.0,355.6 303.0,353.0 306.5,357.0 311.7,360.8 315.6,355.6 319.5,368.6 326.0,371.0 331.0,379.0 339.0,385.6 343.0,380.4 347.0,384.3 350.8,385.6 356.0,380.4 360.0,383.0 367.7,376.5 373.0,364.7 380.7,360.8 388.5,368.6 391.0,368.6 396.0,359.5 400.0,366.0 406.8,359.5 412.0,366.0 415.9,360.8 419.8,353.0 423.7,355.6 430.0,351.7 435.4,349.0 439.3,358.0 445.8,358.0 451.0,354.3 453.6,355.6 456.0,363.4 461.5,359.5 466.7,360.8 470.6,362.0 474.5,355.6 482.3,357.0 490.0,353.0 494.0,351.7 496.6,359.5 500.5,353.0 504.4,354.3 509.6,359.5 514.8,362.0 520.0,347.8 527.9,347.8 531.8,350.4 535.7,359.5 539.6,363.4 543.5,366.0 547.4,363.4 553.9,364.7 560.4,363.4 565.6,366.0 573.4,376.5 580.0,362.0 589.0,362.0 595.0,357.0 600.4,363.4 605.6,359.5 609.5,367.3 613.4,362.0 617.3,368.6 621.3,370.0 625.0,381.7 629.0,380.4 633.0,376.5 636.9,381.7 640.8,389.5 644.7,384.3 648.6,385.6 653.8,383.0 657.7,385.6 661.6,377.8 665.5,371.0 673.3,371.0 679.8,381.7 686.4,383.0 690.3,381.7 694.2,384.3 699.4,389.5 704.6,385.6 707.2,388.2 711.0,383.0 715.0,385.6 720.0,394.7 725.4,390.8 731.9,388.2 737.0,380.4 742.3,392.0 743.6,393.4 750.2,385.6 754.0,380.4 756.7,379.0 760.6,372.5 768.4,371.2 771.0,368.6 777.5,359.5 781.4,364.7 788.0,364.7 793.1,367.3 798.3,375.0 803.5,381.7 810.0,380.4 814.0,384.3 817.9,389.5 821.8,384.3 827.0,386.9 833.5,380.4 837.4,384.3 840.0,381.7 843.9,384.3 849.1,379.0 853.0,372.5 857.0,366.0 860.8,380.4 866.0,376.5 870.0,377.8" fill="none" stroke="#30d030" stroke-width="1.2" stroke-linejoin="round" clip-path="url(#cpGrn)"/><rect x="14" y="345.4" width="17" height="10.6" fill="#3a414a"/><text x="15.6" y="356" font-family="Liberation Sans, sans-serif" font-size="11" fill="#e8862e" stroke="#e8862e" stroke-width="0.2" textLength="14.8" lengthAdjust="spacingAndGlyphs">RSI</text><text x="892" y="383" font-family="Liberation Sans, sans-serif" font-size="11" fill="#f4f4f4" stroke="#f4f4f4" stroke-width="0.35" textLength="12.5" lengthAdjust="spacingAndGlyphs">50</text><rect x="13.8" y="375.6" width="63.2" height="2" fill="#3a414a"/><path d="M13.8,377.5 H74.5 Q76.5,377.5 76.5,379.5 V394.5 Q76.5,396.5 74.5,396.5 H13.8 Z" fill="#5b6a7e" stroke="#b4c6d8" stroke-width="1"/><line x1="13.8" y1="377" x2="13.8" y2="404" stroke="#cfe3dc" stroke-width="1.6"/><text x="21.4" y="391.3" font-family="Liberation Sans, sans-serif" font-size="11" fill="#e8ecf0" stroke="#e8ecf0" stroke-width="0.25" textLength="48.8" lengthAdjust="spacingAndGlyphs">Май 2020</text><rect x="446.8" y="375.6" width="70.49999999999994" height="2" fill="#3a414a"/><path d="M446.8,377.5 H514.8 Q516.8,377.5 516.8,379.5 V394.5 Q516.8,396.5 514.8,396.5 H446.8 Z" fill="#5b6a7e" stroke="#b4c6d8" stroke-width="1"/><line x1="446.8" y1="377" x2="446.8" y2="404" stroke="#cfe3dc" stroke-width="1.6"/><text x="454.3" y="391.3" font-family="Liberation Sans, sans-serif" font-size="11" fill="#e8ecf0" stroke="#e8ecf0" stroke-width="0.25" textLength="56" lengthAdjust="spacingAndGlyphs">Июнь 2020</text><text x="24.7" y="423.2" font-family="Liberation Sans, sans-serif" font-size="11" fill="#f0f0f0" stroke="#f0f0f0" stroke-width="0.4" text-anchor="middle">1</text><text x="44.7" y="423.2" font-family="Liberation Sans, sans-serif" font-size="11" fill="#f0f0f0" stroke="#f0f0f0" stroke-width="0.4" text-anchor="middle">4</text><text x="64.7" y="423.2" font-family="Liberation Sans, sans-serif" font-size="11" fill="#f0f0f0" stroke="#f0f0f0" stroke-width="0.4" text-anchor="middle">5</text><text x="84.7" y="423.2" font-family="Liberation Sans, sans-serif" font-size="11" fill="#f0f0f0" stroke="#f0f0f0" stroke-width="0.4" text-anchor="middle">6</text><text x="104.7" y="423.2" font-family="Liberation Sans, sans-serif" font-size="11" fill="#f0f0f0" stroke="#f0f0f0" stroke-width="0.4" text-anchor="middle">7</text><text x="124.7" y="423.2" font-family="Liberation Sans, sans-serif" font-size="11" fill="#f0f0f0" stroke="#f0f0f0" stroke-width="0.4" text-anchor="middle">8</text><text x="144.7" y="423.2" font-family="Liberation Sans, sans-serif" font-size="11" fill="#f0f0f0" stroke="#f0f0f0" stroke-width="0.4" text-anchor="middle">11</text><text x="164.7" y="423.2" font-family="Liberation Sans, sans-serif" font-size="11" fill="#f0f0f0" stroke="#f0f0f0" stroke-width="0.4" text-anchor="middle">12</text><text x="184.7" y="423.2" font-family="Liberation Sans, sans-serif" font-size="11" fill="#f0f0f0" stroke="#f0f0f0" stroke-width="0.4" text-anchor="middle">13</text><text x="204.7" y="423.2" font-family="Liberation Sans, sans-serif" font-size="11" fill="#f0f0f0" stroke="#f0f0f0" stroke-width="0.4" text-anchor="middle">14</text><text x="224.7" y="423.2" font-family="Liberation Sans, sans-serif" font-size="11" fill="#f0f0f0" stroke="#f0f0f0" stroke-width="0.4" text-anchor="middle">15</text><text x="244.7" y="423.2" font-family="Liberation Sans, sans-serif" font-size="11" fill="#f0f0f0" stroke="#f0f0f0" stroke-width="0.4" text-anchor="middle">18</text><text x="265.7" y="423.2" font-family="Liberation Sans, sans-serif" font-size="11" fill="#f0f0f0" stroke="#f0f0f0" stroke-width="0.4" text-anchor="middle">19</text><text x="285.7" y="423.2" font-family="Liberation Sans, sans-serif" font-size="11" fill="#f0f0f0" stroke="#f0f0f0" stroke-width="0.4" text-anchor="middle">20</text><text x="305.7" y="423.2" font-family="Liberation Sans, sans-serif" font-size="11" fill="#f0f0f0" stroke="#f0f0f0" stroke-width="0.4" text-anchor="middle">21</text><text x="325.7" y="423.2" font-family="Liberation Sans, sans-serif" font-size="11" fill="#f0f0f0" stroke="#f0f0f0" stroke-width="0.4" text-anchor="middle">22</text><text x="345.7" y="423.2" font-family="Liberation Sans, sans-serif" font-size="11" fill="#f0f0f0" stroke="#f0f0f0" stroke-width="0.4" text-anchor="middle">25</text><text x="365.7" y="423.2" font-family="Liberation Sans, sans-serif" font-size="11" fill="#f0f0f0" stroke="#f0f0f0" stroke-width="0.4" text-anchor="middle">26</text><text x="385.7" y="423.2" font-family="Liberation Sans, sans-serif" font-size="11" fill="#f0f0f0" stroke="#f0f0f0" stroke-width="0.4" text-anchor="middle">27</text><text x="405.7" y="423.2" font-family="Liberation Sans, sans-serif" font-size="11" fill="#f0f0f0" stroke="#f0f0f0" stroke-width="0.4" text-anchor="middle">28</text><text x="425.7" y="423.2" font-family="Liberation Sans, sans-serif" font-size="11" fill="#f0f0f0" stroke="#f0f0f0" stroke-width="0.4" text-anchor="middle">29</text><text x="445.7" y="423.2" font-family="Liberation Sans, sans-serif" font-size="11" fill="#f0f0f0" stroke="#f0f0f0" stroke-width="0.4" text-anchor="middle">1</text><text x="465.7" y="423.2" font-family="Liberation Sans, sans-serif" font-size="11" fill="#f0f0f0" stroke="#f0f0f0" stroke-width="0.4" text-anchor="middle">2</text><text x="485.7" y="423.2" font-family="Liberation Sans, sans-serif" font-size="11" fill="#f0f0f0" stroke="#f0f0f0" stroke-width="0.4" text-anchor="middle">3</text><text x="505.7" y="423.2" font-family="Liberation Sans, sans-serif" font-size="11" fill="#f0f0f0" stroke="#f0f0f0" stroke-width="0.4" text-anchor="middle">4</text><text x="525.7" y="423.2" font-family="Liberation Sans, sans-serif" font-size="11" fill="#f0f0f0" stroke="#f0f0f0" stroke-width="0.4" text-anchor="middle">5</text><text x="545.7" y="423.2" font-family="Liberation Sans, sans-serif" font-size="11" fill="#f0f0f0" stroke="#f0f0f0" stroke-width="0.4" text-anchor="middle">8</text><text x="565.7" y="423.2" font-family="Liberation Sans, sans-serif" font-size="11" fill="#f0f0f0" stroke="#f0f0f0" stroke-width="0.4" text-anchor="middle">9</text><text x="585.7" y="423.2" font-family="Liberation Sans, sans-serif" font-size="11" fill="#f0f0f0" stroke="#f0f0f0" stroke-width="0.4" text-anchor="middle">10</text><text x="605.7" y="423.2" font-family="Liberation Sans, sans-serif" font-size="11" fill="#f0f0f0" stroke="#f0f0f0" stroke-width="0.4" text-anchor="middle">11</text><text x="625.7" y="423.2" font-family="Liberation Sans, sans-serif" font-size="11" fill="#f0f0f0" stroke="#f0f0f0" stroke-width="0.4" text-anchor="middle">12</text><text x="645.7" y="423.2" font-family="Liberation Sans, sans-serif" font-size="11" fill="#f0f0f0" stroke="#f0f0f0" stroke-width="0.4" text-anchor="middle">15</text><text x="665.7" y="423.2" font-family="Liberation Sans, sans-serif" font-size="11" fill="#f0f0f0" stroke="#f0f0f0" stroke-width="0.4" text-anchor="middle">16</text><text x="685.7" y="423.2" font-family="Liberation Sans, sans-serif" font-size="11" fill="#f0f0f0" stroke="#f0f0f0" stroke-width="0.4" text-anchor="middle">17</text><text x="705.7" y="423.2" font-family="Liberation Sans, sans-serif" font-size="11" fill="#f0f0f0" stroke="#f0f0f0" stroke-width="0.4" text-anchor="middle">18</text><text x="725.7" y="423.2" font-family="Liberation Sans, sans-serif" font-size="11" fill="#f0f0f0" stroke="#f0f0f0" stroke-width="0.4" text-anchor="middle">19</text><text x="745.7" y="423.2" font-family="Liberation Sans, sans-serif" font-size="11" fill="#f0f0f0" stroke="#f0f0f0" stroke-width="0.4" text-anchor="middle">22</text><text x="766.7" y="423.2" font-family="Liberation Sans, sans-serif" font-size="11" fill="#f0f0f0" stroke="#f0f0f0" stroke-width="0.4" text-anchor="middle">23</text><text x="786.7" y="423.2" font-family="Liberation Sans, sans-serif" font-size="11" fill="#f0f0f0" stroke="#f0f0f0" stroke-width="0.4" text-anchor="middle">24</text><text x="806.7" y="423.2" font-family="Liberation Sans, sans-serif" font-size="11" fill="#f0f0f0" stroke="#f0f0f0" stroke-width="0.4" text-anchor="middle">25</text><text x="826.7" y="423.2" font-family="Liberation Sans, sans-serif" font-size="11" fill="#f0f0f0" stroke="#f0f0f0" stroke-width="0.4" text-anchor="middle">26</text><text x="846.7" y="423.2" font-family="Liberation Sans, sans-serif" font-size="11" fill="#f0f0f0" stroke="#f0f0f0" stroke-width="0.4" text-anchor="middle">29</text><text x="866.7" y="423.2" font-family="Liberation Sans, sans-serif" font-size="11" fill="#f0f0f0" stroke="#f0f0f0" stroke-width="0.4" text-anchor="middle">30</text></svg></body></html>
